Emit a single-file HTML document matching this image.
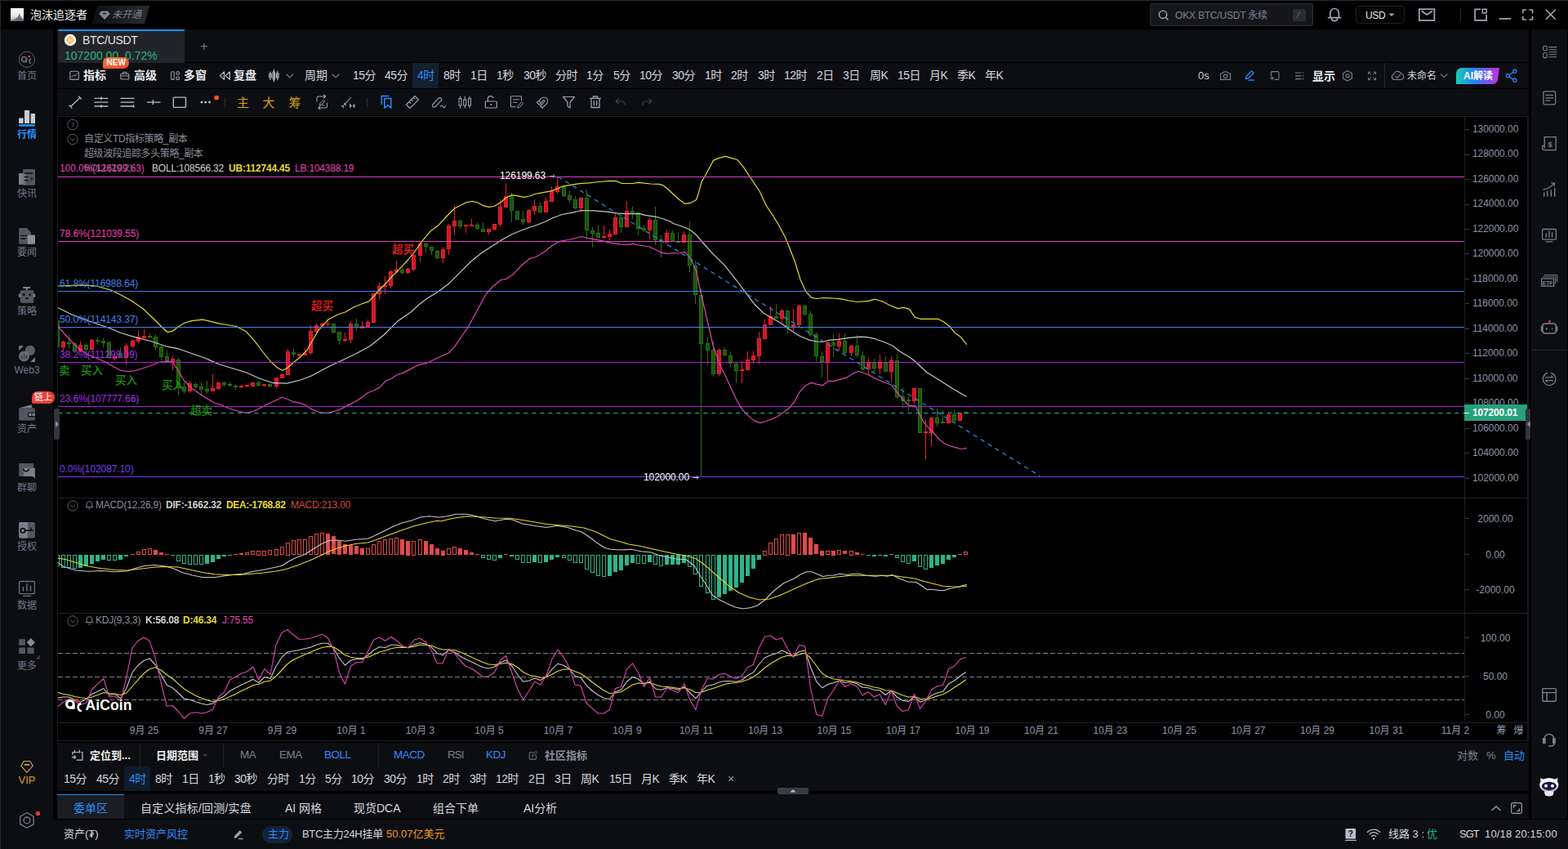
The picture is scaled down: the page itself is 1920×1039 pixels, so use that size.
<!DOCTYPE html>
<html lang="zh"><head><meta charset="utf-8"><title>AiCoin BTC/USDT</title>
<style>
html,body{margin:0;padding:0;background:#000;}
body{width:1920px;height:1039px;overflow:hidden;position:relative;font-family:"Liberation Sans","Noto Sans CJK SC",sans-serif;}
.t{position:absolute;white-space:nowrap;line-height:1;}
.b{position:absolute;}
svg.main{position:absolute;left:0;top:0;}
</style></head><body>
<div class="b" style="left:0px;top:0px;width:1920px;height:1039px;background:#000;"></div>
<div class="b" style="left:0px;top:0px;width:1920px;height:1px;background:#26282d;"></div>
<div class="b" style="left:0px;top:0px;width:1px;height:1039px;background:#26282d;"></div>
<div class="b" style="left:1px;top:36px;width:64.3px;height:1003px;background:#0d0e11;"></div>
<div class="b" style="left:70px;top:36px;width:1802px;height:40px;background:#0d0e11;"></div>
<div class="b" style="left:71px;top:36px;width:155px;height:41px;background:#232429;"></div>
<div class="b" style="left:71px;top:36px;width:155px;height:2px;background:#1890ff;"></div>
<div class="b" style="left:70px;top:77px;width:1802px;height:31px;background:#0d0e11;"></div>
<div class="b" style="left:70px;top:109px;width:1802px;height:32px;background:#0d0e11;"></div>
<div class="b" style="left:1875px;top:36px;width:44px;height:966px;background:#0d0e11;"></div>
<div class="b" style="left:1875px;top:428px;width:44px;height:1px;background:#26282d;"></div>
<div class="b" style="left:70px;top:908.5px;width:1802px;height:59.5px;background:#0d0e11;"></div>
<div class="b" style="left:70px;top:972px;width:1802px;height:30px;background:#0d0e11;"></div>
<div class="b" style="left:70px;top:972px;width:82px;height:30px;background:#1c1d22;"></div>
<div class="b" style="left:70px;top:972px;width:82px;height:1.4px;background:#1890ff;"></div>
<div class="b" style="left:1px;top:1003px;width:1919px;height:36px;background:#0d0e11;"></div>
<div class="b" style="left:505px;top:77px;width:32px;height:31px;background:#13202f;"></div>
<div class="b" style="left:152px;top:938px;width:32px;height:30px;background:#101c2a;"></div>
<div class="b" style="left:952px;top:964px;width:38px;height:8px;background:#3a3d45;border-radius:2px;"></div>
<svg class="main" width="1920" height="1039" viewBox="0 0 1920 1039" shape-rendering="auto">
<line x1="70" y1="142.5" x2="1871" y2="142.5" stroke="#1e2025" stroke-width="1"/>
<line x1="70" y1="609.5" x2="1871" y2="609.5" stroke="#1e2025" stroke-width="1"/>
<line x1="70" y1="750.5" x2="1871" y2="750.5" stroke="#1e2025" stroke-width="1"/>
<line x1="70" y1="884.5" x2="1871" y2="884.5" stroke="#1e2025" stroke-width="1"/>
<line x1="70" y1="906.5" x2="1871" y2="906.5" stroke="#1e2025" stroke-width="1"/>
<line x1="70.5" y1="142" x2="70.5" y2="907" stroke="#1e2025" stroke-width="1"/>
<line x1="1793.5" y1="142" x2="1793.5" y2="884" stroke="#1e2025" stroke-width="1"/>
<rect x="1870.2" y="142" width="1.6" height="765" fill="#1e2025"/>
<line x1="1794" y1="585.5" x2="1799" y2="585.5" stroke="#3a3d45" stroke-width="1"/>
<line x1="1794" y1="554.5" x2="1799" y2="554.5" stroke="#3a3d45" stroke-width="1"/>
<line x1="1794" y1="524.5" x2="1799" y2="524.5" stroke="#3a3d45" stroke-width="1"/>
<line x1="1794" y1="493.5" x2="1799" y2="493.5" stroke="#3a3d45" stroke-width="1"/>
<line x1="1794" y1="463.5" x2="1799" y2="463.5" stroke="#3a3d45" stroke-width="1"/>
<line x1="1794" y1="432.5" x2="1799" y2="432.5" stroke="#3a3d45" stroke-width="1"/>
<line x1="1794" y1="402.5" x2="1799" y2="402.5" stroke="#3a3d45" stroke-width="1"/>
<line x1="1794" y1="371.5" x2="1799" y2="371.5" stroke="#3a3d45" stroke-width="1"/>
<line x1="1794" y1="341.5" x2="1799" y2="341.5" stroke="#3a3d45" stroke-width="1"/>
<line x1="1794" y1="310.5" x2="1799" y2="310.5" stroke="#3a3d45" stroke-width="1"/>
<line x1="1794" y1="280.5" x2="1799" y2="280.5" stroke="#3a3d45" stroke-width="1"/>
<line x1="1794" y1="250.5" x2="1799" y2="250.5" stroke="#3a3d45" stroke-width="1"/>
<line x1="1794" y1="219.5" x2="1799" y2="219.5" stroke="#3a3d45" stroke-width="1"/>
<line x1="1794" y1="189.5" x2="1799" y2="189.5" stroke="#3a3d45" stroke-width="1"/>
<line x1="1794" y1="158.5" x2="1799" y2="158.5" stroke="#3a3d45" stroke-width="1"/>
<line x1="1794" y1="634.5" x2="1799" y2="634.5" stroke="#3a3d45" stroke-width="1"/>
<line x1="1794" y1="678.5" x2="1799" y2="678.5" stroke="#3a3d45" stroke-width="1"/>
<line x1="1794" y1="721.5" x2="1799" y2="721.5" stroke="#3a3d45" stroke-width="1"/>
<line x1="1794" y1="780.5" x2="1799" y2="780.5" stroke="#3a3d45" stroke-width="1"/>
<line x1="1794" y1="827.5" x2="1799" y2="827.5" stroke="#3a3d45" stroke-width="1"/>
<line x1="1794" y1="874.5" x2="1799" y2="874.5" stroke="#3a3d45" stroke-width="1"/>
<clipPath id="cp"><rect x="71" y="143" width="1722" height="465"/></clipPath>
<g clip-path="url(#cp)">
<rect x="70" y="392" width="1" height="33" fill="#27720b"/>
<rect x="68" y="392" width="5" height="33" fill="#27720b"/>
<rect x="69" y="393" width="3" height="31" fill="#1c5309"/>
<rect x="77" y="417" width="1" height="13" fill="#e81f2c"/>
<rect x="75" y="418" width="5" height="7" fill="#e81f2c"/>
<rect x="76" y="419" width="3" height="5" fill="#d21724"/>
<rect x="84" y="410" width="1" height="16" fill="#27720b"/>
<rect x="82" y="419" width="5" height="2" fill="#27720b"/>
<rect x="91" y="419" width="1" height="13" fill="#27720b"/>
<rect x="89" y="420" width="5" height="10" fill="#27720b"/>
<rect x="90" y="421" width="3" height="8" fill="#1c5309"/>
<rect x="98" y="418" width="1" height="13" fill="#e81f2c"/>
<rect x="96" y="422" width="5" height="8" fill="#e81f2c"/>
<rect x="97" y="423" width="3" height="6" fill="#d21724"/>
<rect x="105" y="420" width="1" height="18" fill="#27720b"/>
<rect x="103" y="422" width="5" height="6" fill="#27720b"/>
<rect x="104" y="423" width="3" height="4" fill="#1c5309"/>
<rect x="112" y="415" width="1" height="13" fill="#e81f2c"/>
<rect x="110" y="416" width="5" height="12" fill="#e81f2c"/>
<rect x="111" y="417" width="3" height="10" fill="#d21724"/>
<rect x="119" y="413" width="1" height="9" fill="#27720b"/>
<rect x="117" y="416" width="5" height="2" fill="#27720b"/>
<rect x="126" y="413" width="1" height="12" fill="#27720b"/>
<rect x="124" y="417" width="5" height="3" fill="#27720b"/>
<rect x="125" y="418" width="3" height="1" fill="#1c5309"/>
<rect x="133" y="418" width="1" height="21" fill="#27720b"/>
<rect x="131" y="419" width="5" height="19" fill="#27720b"/>
<rect x="132" y="420" width="3" height="17" fill="#1c5309"/>
<rect x="140" y="433" width="1" height="8" fill="#e81f2c"/>
<rect x="138" y="436" width="5" height="3" fill="#e81f2c"/>
<rect x="139" y="437" width="3" height="1" fill="#d21724"/>
<rect x="147" y="425" width="1" height="13" fill="#27720b"/>
<rect x="145" y="432" width="5" height="6" fill="#27720b"/>
<rect x="146" y="433" width="3" height="4" fill="#1c5309"/>
<rect x="154" y="420" width="1" height="27" fill="#e81f2c"/>
<rect x="152" y="423" width="5" height="15" fill="#e81f2c"/>
<rect x="153" y="424" width="3" height="13" fill="#d21724"/>
<rect x="162" y="415" width="1" height="11" fill="#e81f2c"/>
<rect x="160" y="417" width="5" height="7" fill="#e81f2c"/>
<rect x="161" y="418" width="3" height="5" fill="#d21724"/>
<rect x="169" y="404" width="1" height="16" fill="#e81f2c"/>
<rect x="167" y="412" width="5" height="6" fill="#e81f2c"/>
<rect x="168" y="413" width="3" height="4" fill="#d21724"/>
<rect x="176" y="403" width="1" height="11" fill="#e81f2c"/>
<rect x="174" y="411" width="5" height="3" fill="#e81f2c"/>
<rect x="175" y="412" width="3" height="1" fill="#d21724"/>
<rect x="183" y="408" width="1" height="6" fill="#27720b"/>
<rect x="181" y="411" width="5" height="2" fill="#27720b"/>
<rect x="190" y="409" width="1" height="20" fill="#27720b"/>
<rect x="188" y="412" width="5" height="13" fill="#27720b"/>
<rect x="189" y="413" width="3" height="11" fill="#1c5309"/>
<rect x="197" y="423" width="1" height="18" fill="#27720b"/>
<rect x="195" y="424" width="5" height="13" fill="#27720b"/>
<rect x="196" y="425" width="3" height="11" fill="#1c5309"/>
<rect x="204" y="429" width="1" height="14" fill="#27720b"/>
<rect x="202" y="436" width="5" height="6" fill="#27720b"/>
<rect x="203" y="437" width="3" height="4" fill="#1c5309"/>
<rect x="211" y="436" width="1" height="17" fill="#e81f2c"/>
<rect x="209" y="439" width="5" height="4" fill="#e81f2c"/>
<rect x="210" y="440" width="3" height="2" fill="#d21724"/>
<rect x="218" y="438" width="1" height="46" fill="#27720b"/>
<rect x="216" y="440" width="5" height="35" fill="#27720b"/>
<rect x="217" y="441" width="3" height="33" fill="#1c5309"/>
<rect x="225" y="468" width="1" height="14" fill="#27720b"/>
<rect x="223" y="473" width="5" height="6" fill="#27720b"/>
<rect x="224" y="474" width="3" height="4" fill="#1c5309"/>
<rect x="232" y="466" width="1" height="15" fill="#e81f2c"/>
<rect x="230" y="469" width="5" height="10" fill="#e81f2c"/>
<rect x="231" y="470" width="3" height="8" fill="#d21724"/>
<rect x="239" y="468" width="1" height="8" fill="#27720b"/>
<rect x="237" y="470" width="5" height="4" fill="#27720b"/>
<rect x="238" y="471" width="3" height="2" fill="#1c5309"/>
<rect x="246" y="468" width="1" height="15" fill="#27720b"/>
<rect x="244" y="473" width="5" height="4" fill="#27720b"/>
<rect x="245" y="474" width="3" height="2" fill="#1c5309"/>
<rect x="253" y="466" width="1" height="16" fill="#27720b"/>
<rect x="251" y="476" width="5" height="3" fill="#27720b"/>
<rect x="252" y="477" width="3" height="1" fill="#1c5309"/>
<rect x="260" y="458" width="1" height="21" fill="#e81f2c"/>
<rect x="258" y="475" width="5" height="4" fill="#e81f2c"/>
<rect x="259" y="476" width="3" height="2" fill="#d21724"/>
<rect x="267" y="468" width="1" height="9" fill="#e81f2c"/>
<rect x="265" y="468" width="5" height="8" fill="#e81f2c"/>
<rect x="266" y="469" width="3" height="6" fill="#d21724"/>
<rect x="274" y="467" width="1" height="6" fill="#27720b"/>
<rect x="272" y="468" width="5" height="3" fill="#27720b"/>
<rect x="273" y="469" width="3" height="1" fill="#1c5309"/>
<rect x="281" y="467" width="1" height="6" fill="#27720b"/>
<rect x="279" y="470" width="5" height="2" fill="#27720b"/>
<rect x="288" y="471" width="1" height="6" fill="#27720b"/>
<rect x="286" y="472" width="5" height="2" fill="#27720b"/>
<rect x="295" y="471" width="1" height="4" fill="#e81f2c"/>
<rect x="293" y="472" width="5" height="2" fill="#e81f2c"/>
<rect x="302" y="471" width="1" height="3" fill="#e81f2c"/>
<rect x="300" y="471" width="5" height="2" fill="#e81f2c"/>
<rect x="309" y="468" width="1" height="5" fill="#e81f2c"/>
<rect x="307" y="468" width="5" height="5" fill="#e81f2c"/>
<rect x="308" y="469" width="3" height="3" fill="#d21724"/>
<rect x="316" y="466" width="1" height="7" fill="#27720b"/>
<rect x="314" y="468" width="5" height="4" fill="#27720b"/>
<rect x="315" y="469" width="3" height="2" fill="#1c5309"/>
<rect x="323" y="470" width="1" height="4" fill="#e81f2c"/>
<rect x="321" y="470" width="5" height="2" fill="#e81f2c"/>
<rect x="330" y="469" width="1" height="5" fill="#27720b"/>
<rect x="328" y="470" width="5" height="3" fill="#27720b"/>
<rect x="329" y="471" width="3" height="1" fill="#1c5309"/>
<rect x="338" y="462" width="1" height="13" fill="#e81f2c"/>
<rect x="336" y="462" width="5" height="11" fill="#e81f2c"/>
<rect x="337" y="463" width="3" height="9" fill="#d21724"/>
<rect x="345" y="457" width="1" height="6" fill="#e81f2c"/>
<rect x="343" y="458" width="5" height="5" fill="#e81f2c"/>
<rect x="344" y="459" width="3" height="3" fill="#d21724"/>
<rect x="352" y="427" width="1" height="32" fill="#e81f2c"/>
<rect x="350" y="430" width="5" height="29" fill="#e81f2c"/>
<rect x="351" y="431" width="3" height="27" fill="#d21724"/>
<rect x="359" y="427" width="1" height="11" fill="#27720b"/>
<rect x="357" y="431" width="5" height="3" fill="#27720b"/>
<rect x="358" y="432" width="3" height="1" fill="#1c5309"/>
<rect x="366" y="433" width="1" height="4" fill="#e81f2c"/>
<rect x="364" y="433" width="5" height="2" fill="#e81f2c"/>
<rect x="373" y="426" width="1" height="9" fill="#e81f2c"/>
<rect x="371" y="432" width="5" height="3" fill="#e81f2c"/>
<rect x="372" y="433" width="3" height="1" fill="#d21724"/>
<rect x="380" y="398" width="1" height="36" fill="#e81f2c"/>
<rect x="378" y="405" width="5" height="27" fill="#e81f2c"/>
<rect x="379" y="406" width="3" height="25" fill="#d21724"/>
<rect x="387" y="396" width="1" height="12" fill="#e81f2c"/>
<rect x="385" y="398" width="5" height="8" fill="#e81f2c"/>
<rect x="386" y="399" width="3" height="6" fill="#d21724"/>
<rect x="394" y="395" width="1" height="5" fill="#e81f2c"/>
<rect x="392" y="396" width="5" height="3" fill="#e81f2c"/>
<rect x="393" y="397" width="3" height="1" fill="#d21724"/>
<rect x="401" y="390" width="1" height="10" fill="#e81f2c"/>
<rect x="399" y="396" width="5" height="1" fill="#e81f2c"/>
<rect x="408" y="396" width="1" height="12" fill="#27720b"/>
<rect x="406" y="396" width="5" height="11" fill="#27720b"/>
<rect x="407" y="397" width="3" height="9" fill="#1c5309"/>
<rect x="415" y="406" width="1" height="16" fill="#27720b"/>
<rect x="413" y="406" width="5" height="11" fill="#27720b"/>
<rect x="414" y="407" width="3" height="9" fill="#1c5309"/>
<rect x="422" y="407" width="1" height="12" fill="#e81f2c"/>
<rect x="420" y="415" width="5" height="2" fill="#e81f2c"/>
<rect x="429" y="393" width="1" height="27" fill="#e81f2c"/>
<rect x="427" y="396" width="5" height="20" fill="#e81f2c"/>
<rect x="428" y="397" width="3" height="18" fill="#d21724"/>
<rect x="436" y="390" width="1" height="15" fill="#27720b"/>
<rect x="434" y="396" width="5" height="5" fill="#27720b"/>
<rect x="435" y="397" width="3" height="3" fill="#1c5309"/>
<rect x="443" y="393" width="1" height="9" fill="#e81f2c"/>
<rect x="441" y="399" width="5" height="3" fill="#e81f2c"/>
<rect x="442" y="400" width="3" height="1" fill="#d21724"/>
<rect x="450" y="391" width="1" height="9" fill="#e81f2c"/>
<rect x="448" y="394" width="5" height="6" fill="#e81f2c"/>
<rect x="449" y="395" width="3" height="4" fill="#d21724"/>
<rect x="457" y="359" width="1" height="36" fill="#e81f2c"/>
<rect x="455" y="359" width="5" height="36" fill="#e81f2c"/>
<rect x="456" y="360" width="3" height="34" fill="#d21724"/>
<rect x="464" y="346" width="1" height="20" fill="#e81f2c"/>
<rect x="462" y="350" width="5" height="10" fill="#e81f2c"/>
<rect x="463" y="351" width="3" height="8" fill="#d21724"/>
<rect x="471" y="338" width="1" height="22" fill="#e81f2c"/>
<rect x="469" y="349" width="5" height="2" fill="#e81f2c"/>
<rect x="478" y="331" width="1" height="22" fill="#e81f2c"/>
<rect x="476" y="332" width="5" height="18" fill="#e81f2c"/>
<rect x="477" y="333" width="3" height="16" fill="#d21724"/>
<rect x="485" y="319" width="1" height="16" fill="#e81f2c"/>
<rect x="483" y="330" width="5" height="3" fill="#e81f2c"/>
<rect x="484" y="331" width="3" height="1" fill="#d21724"/>
<rect x="492" y="327" width="1" height="9" fill="#27720b"/>
<rect x="490" y="330" width="5" height="4" fill="#27720b"/>
<rect x="491" y="331" width="3" height="2" fill="#1c5309"/>
<rect x="499" y="327" width="1" height="8" fill="#e81f2c"/>
<rect x="497" y="329" width="5" height="5" fill="#e81f2c"/>
<rect x="498" y="330" width="3" height="3" fill="#d21724"/>
<rect x="506" y="311" width="1" height="21" fill="#e81f2c"/>
<rect x="504" y="312" width="5" height="18" fill="#e81f2c"/>
<rect x="505" y="313" width="3" height="16" fill="#d21724"/>
<rect x="514" y="298" width="1" height="22" fill="#e81f2c"/>
<rect x="512" y="298" width="5" height="15" fill="#e81f2c"/>
<rect x="513" y="299" width="3" height="13" fill="#d21724"/>
<rect x="521" y="297" width="1" height="12" fill="#27720b"/>
<rect x="519" y="298" width="5" height="4" fill="#27720b"/>
<rect x="520" y="299" width="3" height="2" fill="#1c5309"/>
<rect x="528" y="302" width="1" height="10" fill="#27720b"/>
<rect x="526" y="302" width="5" height="5" fill="#27720b"/>
<rect x="527" y="303" width="3" height="3" fill="#1c5309"/>
<rect x="535" y="306" width="1" height="11" fill="#27720b"/>
<rect x="533" y="307" width="5" height="9" fill="#27720b"/>
<rect x="534" y="308" width="3" height="7" fill="#1c5309"/>
<rect x="542" y="302" width="1" height="20" fill="#e81f2c"/>
<rect x="540" y="305" width="5" height="11" fill="#e81f2c"/>
<rect x="541" y="306" width="3" height="9" fill="#d21724"/>
<rect x="549" y="274" width="1" height="38" fill="#e81f2c"/>
<rect x="547" y="276" width="5" height="29" fill="#e81f2c"/>
<rect x="548" y="277" width="3" height="27" fill="#d21724"/>
<rect x="556" y="251" width="1" height="37" fill="#e81f2c"/>
<rect x="554" y="270" width="5" height="7" fill="#e81f2c"/>
<rect x="555" y="271" width="3" height="5" fill="#d21724"/>
<rect x="563" y="269" width="1" height="11" fill="#27720b"/>
<rect x="561" y="270" width="5" height="7" fill="#27720b"/>
<rect x="562" y="271" width="3" height="5" fill="#1c5309"/>
<rect x="570" y="275" width="1" height="10" fill="#e81f2c"/>
<rect x="568" y="275" width="5" height="2" fill="#e81f2c"/>
<rect x="577" y="268" width="1" height="9" fill="#e81f2c"/>
<rect x="575" y="275" width="5" height="2" fill="#e81f2c"/>
<rect x="584" y="272" width="1" height="9" fill="#27720b"/>
<rect x="582" y="275" width="5" height="5" fill="#27720b"/>
<rect x="583" y="276" width="3" height="3" fill="#1c5309"/>
<rect x="591" y="272" width="1" height="12" fill="#27720b"/>
<rect x="589" y="280" width="5" height="4" fill="#27720b"/>
<rect x="590" y="281" width="3" height="2" fill="#1c5309"/>
<rect x="598" y="280" width="1" height="7" fill="#e81f2c"/>
<rect x="596" y="280" width="5" height="4" fill="#e81f2c"/>
<rect x="597" y="281" width="3" height="2" fill="#d21724"/>
<rect x="605" y="274" width="1" height="8" fill="#e81f2c"/>
<rect x="603" y="274" width="5" height="7" fill="#e81f2c"/>
<rect x="604" y="275" width="3" height="5" fill="#d21724"/>
<rect x="612" y="244" width="1" height="34" fill="#e81f2c"/>
<rect x="610" y="253" width="5" height="22" fill="#e81f2c"/>
<rect x="611" y="254" width="3" height="20" fill="#d21724"/>
<rect x="619" y="224" width="1" height="30" fill="#e81f2c"/>
<rect x="617" y="240" width="5" height="14" fill="#e81f2c"/>
<rect x="618" y="241" width="3" height="12" fill="#d21724"/>
<rect x="626" y="236" width="1" height="36" fill="#27720b"/>
<rect x="624" y="240" width="5" height="18" fill="#27720b"/>
<rect x="625" y="241" width="3" height="16" fill="#1c5309"/>
<rect x="633" y="258" width="1" height="11" fill="#27720b"/>
<rect x="631" y="258" width="5" height="11" fill="#27720b"/>
<rect x="632" y="259" width="3" height="9" fill="#1c5309"/>
<rect x="640" y="258" width="1" height="17" fill="#27720b"/>
<rect x="638" y="268" width="5" height="4" fill="#27720b"/>
<rect x="639" y="269" width="3" height="2" fill="#1c5309"/>
<rect x="647" y="256" width="1" height="17" fill="#e81f2c"/>
<rect x="645" y="257" width="5" height="15" fill="#e81f2c"/>
<rect x="646" y="258" width="3" height="13" fill="#d21724"/>
<rect x="654" y="244" width="1" height="19" fill="#e81f2c"/>
<rect x="652" y="252" width="5" height="6" fill="#e81f2c"/>
<rect x="653" y="253" width="3" height="4" fill="#d21724"/>
<rect x="661" y="248" width="1" height="12" fill="#27720b"/>
<rect x="659" y="252" width="5" height="8" fill="#27720b"/>
<rect x="660" y="253" width="3" height="6" fill="#1c5309"/>
<rect x="668" y="241" width="1" height="19" fill="#e81f2c"/>
<rect x="666" y="246" width="5" height="14" fill="#e81f2c"/>
<rect x="667" y="247" width="3" height="12" fill="#d21724"/>
<rect x="675" y="228" width="1" height="19" fill="#e81f2c"/>
<rect x="673" y="233" width="5" height="14" fill="#e81f2c"/>
<rect x="674" y="234" width="3" height="12" fill="#d21724"/>
<rect x="682" y="217" width="1" height="20" fill="#e81f2c"/>
<rect x="680" y="228" width="5" height="7" fill="#e81f2c"/>
<rect x="681" y="229" width="3" height="5" fill="#d21724"/>
<rect x="690" y="226" width="1" height="15" fill="#27720b"/>
<rect x="688" y="229" width="5" height="11" fill="#27720b"/>
<rect x="689" y="230" width="3" height="9" fill="#1c5309"/>
<rect x="697" y="233" width="1" height="15" fill="#27720b"/>
<rect x="695" y="239" width="5" height="6" fill="#27720b"/>
<rect x="696" y="240" width="3" height="4" fill="#1c5309"/>
<rect x="704" y="240" width="1" height="16" fill="#27720b"/>
<rect x="702" y="244" width="5" height="11" fill="#27720b"/>
<rect x="703" y="245" width="3" height="9" fill="#1c5309"/>
<rect x="711" y="241" width="1" height="19" fill="#e81f2c"/>
<rect x="709" y="242" width="5" height="13" fill="#e81f2c"/>
<rect x="710" y="243" width="3" height="11" fill="#d21724"/>
<rect x="718" y="232" width="1" height="59" fill="#27720b"/>
<rect x="716" y="242" width="5" height="40" fill="#27720b"/>
<rect x="717" y="243" width="3" height="38" fill="#1c5309"/>
<rect x="725" y="278" width="1" height="24" fill="#27720b"/>
<rect x="723" y="282" width="5" height="4" fill="#27720b"/>
<rect x="724" y="283" width="3" height="2" fill="#1c5309"/>
<rect x="732" y="275" width="1" height="16" fill="#27720b"/>
<rect x="730" y="285" width="5" height="6" fill="#27720b"/>
<rect x="731" y="286" width="3" height="4" fill="#1c5309"/>
<rect x="739" y="276" width="1" height="16" fill="#e81f2c"/>
<rect x="737" y="289" width="5" height="2" fill="#e81f2c"/>
<rect x="746" y="281" width="1" height="13" fill="#e81f2c"/>
<rect x="744" y="286" width="5" height="4" fill="#e81f2c"/>
<rect x="745" y="287" width="3" height="2" fill="#d21724"/>
<rect x="753" y="262" width="1" height="25" fill="#e81f2c"/>
<rect x="751" y="266" width="5" height="21" fill="#e81f2c"/>
<rect x="752" y="267" width="3" height="19" fill="#d21724"/>
<rect x="760" y="260" width="1" height="25" fill="#27720b"/>
<rect x="758" y="266" width="5" height="12" fill="#27720b"/>
<rect x="759" y="267" width="3" height="10" fill="#1c5309"/>
<rect x="767" y="246" width="1" height="32" fill="#e81f2c"/>
<rect x="765" y="258" width="5" height="20" fill="#e81f2c"/>
<rect x="766" y="259" width="3" height="18" fill="#d21724"/>
<rect x="774" y="253" width="1" height="15" fill="#27720b"/>
<rect x="772" y="258" width="5" height="3" fill="#27720b"/>
<rect x="773" y="259" width="3" height="1" fill="#1c5309"/>
<rect x="781" y="260" width="1" height="28" fill="#27720b"/>
<rect x="779" y="260" width="5" height="20" fill="#27720b"/>
<rect x="780" y="261" width="3" height="18" fill="#1c5309"/>
<rect x="788" y="276" width="1" height="8" fill="#27720b"/>
<rect x="786" y="279" width="5" height="3" fill="#27720b"/>
<rect x="787" y="280" width="3" height="1" fill="#1c5309"/>
<rect x="795" y="267" width="1" height="26" fill="#e81f2c"/>
<rect x="793" y="269" width="5" height="13" fill="#e81f2c"/>
<rect x="794" y="270" width="3" height="11" fill="#d21724"/>
<rect x="802" y="253" width="1" height="47" fill="#27720b"/>
<rect x="800" y="269" width="5" height="25" fill="#27720b"/>
<rect x="801" y="270" width="3" height="23" fill="#1c5309"/>
<rect x="809" y="288" width="1" height="27" fill="#27720b"/>
<rect x="807" y="293" width="5" height="3" fill="#27720b"/>
<rect x="808" y="294" width="3" height="1" fill="#1c5309"/>
<rect x="816" y="281" width="1" height="16" fill="#e81f2c"/>
<rect x="814" y="285" width="5" height="12" fill="#e81f2c"/>
<rect x="815" y="286" width="3" height="10" fill="#d21724"/>
<rect x="823" y="282" width="1" height="14" fill="#27720b"/>
<rect x="821" y="285" width="5" height="11" fill="#27720b"/>
<rect x="822" y="286" width="3" height="9" fill="#1c5309"/>
<rect x="830" y="284" width="1" height="13" fill="#27720b"/>
<rect x="828" y="296" width="5" height="1" fill="#27720b"/>
<rect x="837" y="283" width="1" height="14" fill="#e81f2c"/>
<rect x="835" y="287" width="5" height="10" fill="#e81f2c"/>
<rect x="836" y="288" width="3" height="8" fill="#d21724"/>
<rect x="844" y="271" width="1" height="62" fill="#27720b"/>
<rect x="842" y="287" width="5" height="38" fill="#27720b"/>
<rect x="843" y="288" width="3" height="36" fill="#1c5309"/>
<rect x="851" y="319" width="1" height="53" fill="#27720b"/>
<rect x="849" y="325" width="5" height="36" fill="#27720b"/>
<rect x="850" y="326" width="3" height="34" fill="#1c5309"/>
<rect x="858" y="353" width="1" height="229" fill="#27720b"/>
<rect x="856" y="361" width="5" height="60" fill="#27720b"/>
<rect x="857" y="362" width="3" height="58" fill="#1c5309"/>
<rect x="866" y="412" width="1" height="35" fill="#27720b"/>
<rect x="864" y="420" width="5" height="9" fill="#27720b"/>
<rect x="865" y="421" width="3" height="7" fill="#1c5309"/>
<rect x="873" y="418" width="1" height="43" fill="#27720b"/>
<rect x="871" y="428" width="5" height="30" fill="#27720b"/>
<rect x="872" y="429" width="3" height="28" fill="#1c5309"/>
<rect x="880" y="427" width="1" height="33" fill="#e81f2c"/>
<rect x="878" y="428" width="5" height="30" fill="#e81f2c"/>
<rect x="879" y="429" width="3" height="28" fill="#d21724"/>
<rect x="887" y="425" width="1" height="11" fill="#27720b"/>
<rect x="885" y="428" width="5" height="7" fill="#27720b"/>
<rect x="886" y="429" width="3" height="5" fill="#1c5309"/>
<rect x="894" y="430" width="1" height="19" fill="#27720b"/>
<rect x="892" y="435" width="5" height="10" fill="#27720b"/>
<rect x="893" y="436" width="3" height="8" fill="#1c5309"/>
<rect x="901" y="442" width="1" height="27" fill="#27720b"/>
<rect x="899" y="445" width="5" height="9" fill="#27720b"/>
<rect x="900" y="446" width="3" height="7" fill="#1c5309"/>
<rect x="908" y="442" width="1" height="27" fill="#e81f2c"/>
<rect x="906" y="452" width="5" height="2" fill="#e81f2c"/>
<rect x="915" y="430" width="1" height="23" fill="#e81f2c"/>
<rect x="913" y="440" width="5" height="13" fill="#e81f2c"/>
<rect x="914" y="441" width="3" height="11" fill="#d21724"/>
<rect x="922" y="430" width="1" height="15" fill="#e81f2c"/>
<rect x="920" y="435" width="5" height="6" fill="#e81f2c"/>
<rect x="921" y="436" width="3" height="4" fill="#d21724"/>
<rect x="929" y="406" width="1" height="39" fill="#e81f2c"/>
<rect x="927" y="414" width="5" height="22" fill="#e81f2c"/>
<rect x="928" y="415" width="3" height="20" fill="#d21724"/>
<rect x="936" y="391" width="1" height="24" fill="#e81f2c"/>
<rect x="934" y="397" width="5" height="18" fill="#e81f2c"/>
<rect x="935" y="398" width="3" height="16" fill="#d21724"/>
<rect x="943" y="375" width="1" height="23" fill="#e81f2c"/>
<rect x="941" y="387" width="5" height="11" fill="#e81f2c"/>
<rect x="942" y="388" width="3" height="9" fill="#d21724"/>
<rect x="950" y="372" width="1" height="18" fill="#27720b"/>
<rect x="948" y="387" width="5" height="3" fill="#27720b"/>
<rect x="949" y="388" width="3" height="1" fill="#1c5309"/>
<rect x="957" y="378" width="1" height="17" fill="#e81f2c"/>
<rect x="955" y="380" width="5" height="10" fill="#e81f2c"/>
<rect x="956" y="381" width="3" height="8" fill="#d21724"/>
<rect x="964" y="380" width="1" height="28" fill="#27720b"/>
<rect x="962" y="380" width="5" height="20" fill="#27720b"/>
<rect x="963" y="381" width="3" height="18" fill="#1c5309"/>
<rect x="971" y="378" width="1" height="27" fill="#e81f2c"/>
<rect x="969" y="397" width="5" height="3" fill="#e81f2c"/>
<rect x="970" y="398" width="3" height="1" fill="#d21724"/>
<rect x="978" y="373" width="1" height="25" fill="#e81f2c"/>
<rect x="976" y="374" width="5" height="24" fill="#e81f2c"/>
<rect x="977" y="375" width="3" height="22" fill="#d21724"/>
<rect x="985" y="373" width="1" height="14" fill="#27720b"/>
<rect x="983" y="374" width="5" height="11" fill="#27720b"/>
<rect x="984" y="375" width="3" height="9" fill="#1c5309"/>
<rect x="992" y="380" width="1" height="32" fill="#27720b"/>
<rect x="990" y="384" width="5" height="26" fill="#27720b"/>
<rect x="991" y="385" width="3" height="24" fill="#1c5309"/>
<rect x="999" y="407" width="1" height="35" fill="#27720b"/>
<rect x="997" y="409" width="5" height="27" fill="#27720b"/>
<rect x="998" y="410" width="3" height="25" fill="#1c5309"/>
<rect x="1006" y="430" width="1" height="32" fill="#27720b"/>
<rect x="1004" y="436" width="5" height="7" fill="#27720b"/>
<rect x="1005" y="437" width="3" height="5" fill="#1c5309"/>
<rect x="1013" y="418" width="1" height="47" fill="#e81f2c"/>
<rect x="1011" y="419" width="5" height="24" fill="#e81f2c"/>
<rect x="1012" y="420" width="3" height="22" fill="#d21724"/>
<rect x="1020" y="409" width="1" height="28" fill="#27720b"/>
<rect x="1018" y="419" width="5" height="4" fill="#27720b"/>
<rect x="1019" y="420" width="3" height="2" fill="#1c5309"/>
<rect x="1027" y="408" width="1" height="21" fill="#e81f2c"/>
<rect x="1025" y="417" width="5" height="7" fill="#e81f2c"/>
<rect x="1026" y="418" width="3" height="5" fill="#d21724"/>
<rect x="1034" y="408" width="1" height="25" fill="#27720b"/>
<rect x="1032" y="417" width="5" height="15" fill="#27720b"/>
<rect x="1033" y="418" width="3" height="13" fill="#1c5309"/>
<rect x="1042" y="422" width="1" height="14" fill="#e81f2c"/>
<rect x="1040" y="423" width="5" height="9" fill="#e81f2c"/>
<rect x="1041" y="424" width="3" height="7" fill="#d21724"/>
<rect x="1049" y="410" width="1" height="27" fill="#27720b"/>
<rect x="1047" y="423" width="5" height="12" fill="#27720b"/>
<rect x="1048" y="424" width="3" height="10" fill="#1c5309"/>
<rect x="1056" y="430" width="1" height="25" fill="#27720b"/>
<rect x="1054" y="435" width="5" height="17" fill="#27720b"/>
<rect x="1055" y="436" width="3" height="15" fill="#1c5309"/>
<rect x="1063" y="439" width="1" height="21" fill="#e81f2c"/>
<rect x="1061" y="444" width="5" height="8" fill="#e81f2c"/>
<rect x="1062" y="445" width="3" height="6" fill="#d21724"/>
<rect x="1070" y="439" width="1" height="16" fill="#27720b"/>
<rect x="1068" y="444" width="5" height="7" fill="#27720b"/>
<rect x="1069" y="445" width="3" height="5" fill="#1c5309"/>
<rect x="1077" y="434" width="1" height="24" fill="#e81f2c"/>
<rect x="1075" y="444" width="5" height="7" fill="#e81f2c"/>
<rect x="1076" y="445" width="3" height="5" fill="#d21724"/>
<rect x="1084" y="436" width="1" height="19" fill="#27720b"/>
<rect x="1082" y="444" width="5" height="11" fill="#27720b"/>
<rect x="1083" y="445" width="3" height="9" fill="#1c5309"/>
<rect x="1091" y="436" width="1" height="32" fill="#e81f2c"/>
<rect x="1089" y="441" width="5" height="14" fill="#e81f2c"/>
<rect x="1090" y="442" width="3" height="12" fill="#d21724"/>
<rect x="1098" y="433" width="1" height="55" fill="#27720b"/>
<rect x="1096" y="441" width="5" height="45" fill="#27720b"/>
<rect x="1097" y="442" width="3" height="43" fill="#1c5309"/>
<rect x="1105" y="474" width="1" height="26" fill="#27720b"/>
<rect x="1103" y="485" width="5" height="6" fill="#27720b"/>
<rect x="1104" y="486" width="3" height="4" fill="#1c5309"/>
<rect x="1112" y="486" width="1" height="16" fill="#27720b"/>
<rect x="1110" y="489" width="5" height="2" fill="#27720b"/>
<rect x="1119" y="474" width="1" height="20" fill="#e81f2c"/>
<rect x="1117" y="475" width="5" height="16" fill="#e81f2c"/>
<rect x="1118" y="476" width="3" height="14" fill="#d21724"/>
<rect x="1126" y="475" width="1" height="55" fill="#27720b"/>
<rect x="1124" y="475" width="5" height="55" fill="#27720b"/>
<rect x="1125" y="476" width="3" height="53" fill="#1c5309"/>
<rect x="1133" y="514" width="1" height="48" fill="#e81f2c"/>
<rect x="1131" y="528" width="5" height="2" fill="#e81f2c"/>
<rect x="1140" y="511" width="1" height="35" fill="#e81f2c"/>
<rect x="1138" y="511" width="5" height="19" fill="#e81f2c"/>
<rect x="1139" y="512" width="3" height="17" fill="#d21724"/>
<rect x="1147" y="500" width="1" height="22" fill="#27720b"/>
<rect x="1145" y="511" width="5" height="7" fill="#27720b"/>
<rect x="1146" y="512" width="3" height="5" fill="#1c5309"/>
<rect x="1154" y="502" width="1" height="16" fill="#27720b"/>
<rect x="1152" y="516" width="5" height="2" fill="#27720b"/>
<rect x="1161" y="504" width="1" height="15" fill="#e81f2c"/>
<rect x="1159" y="507" width="5" height="11" fill="#e81f2c"/>
<rect x="1160" y="508" width="3" height="9" fill="#d21724"/>
<rect x="1168" y="501" width="1" height="16" fill="#27720b"/>
<rect x="1166" y="507" width="5" height="8" fill="#27720b"/>
<rect x="1167" y="508" width="3" height="6" fill="#1c5309"/>
<rect x="1175" y="505" width="1" height="10" fill="#e81f2c"/>
<rect x="1173" y="505" width="5" height="10" fill="#e81f2c"/>
<rect x="1174" y="506" width="3" height="8" fill="#d21724"/>
<rect x="1182" y="504" width="1" height="3" fill="#27720b"/>
<rect x="1180" y="504" width="5" height="2" fill="#27720b"/>
<polyline points="70.0,376.0 71.3,376.7 88.0,385.0 109.7,393.3 134.7,401.7 148.0,407.5 168.0,413.3 184.7,417.5 204.7,424.2 218.0,426.7 234.7,432.5 251.3,438.3 268.0,445.8 284.7,450.8 301.3,455.8 318.0,463.3 334.7,468.7 351.3,469.2 368.0,465.0 381.3,460.0 388.0,456.3 403.3,448.3 436.7,432.5 453.3,423.3 470.0,410.0 486.7,393.3 503.3,381.7 513.3,372.5 523.3,365.0 536.7,356.7 550.0,346.7 563.3,333.3 576.7,320.0 590.0,309.2 603.3,300.8 613.3,294.2 626.7,286.7 640.0,281.3 653.3,276.7 666.7,271.7 676.7,266.7 688.3,262.5 700.0,260.3 711.7,257.5 726.7,257.8 743.3,259.2 755.0,260.8 766.7,261.7 783.3,261.7 790.0,263.3 803.3,265.3 813.3,268.3 820.0,270.8 825.0,273.7 835.0,277.0 845.0,281.2 853.3,288.3 863.3,300.0 873.3,310.8 886.7,324.2 896.7,336.7 903.3,345.0 913.3,358.3 923.3,371.7 935.0,383.3 946.7,390.0 956.7,395.8 966.7,403.3 978.3,410.8 990.0,415.8 1000.0,418.0 1008.3,418.3 1015.0,416.3 1026.7,415.3 1040.0,413.3 1053.3,412.2 1061.7,412.7 1071.7,414.7 1081.7,418.3 1093.3,423.3 1101.7,430.0 1113.3,436.7 1120.0,441.7 1135.0,455.8 1150.0,465.0 1166.7,475.8 1183.7,485.5" fill="none" stroke="#c8c8c8" stroke-width="1.2" stroke-linejoin="round"/>
<polyline points="70.0,350.2 71.8,350.0 83.0,349.5 100.5,348.8 118.0,350.0 135.5,355.0 146.3,360.0 161.3,368.3 174.7,377.5 188.0,390.0 198.0,400.0 204.7,406.3 211.3,405.3 218.0,400.0 226.3,395.0 234.7,392.7 248.0,391.2 258.0,393.3 268.0,395.8 278.0,397.5 289.7,399.5 301.3,405.8 311.3,416.7 321.3,430.0 331.3,442.5 339.7,450.0 345.5,453.3 351.3,450.8 359.7,443.3 368.0,436.7 376.3,428.0 381.3,419.0 390.0,404.2 401.7,391.3 413.3,385.0 423.3,381.7 433.3,375.8 443.3,371.7 451.7,368.9 458.3,362.0 463.3,355.8 471.7,347.5 480.0,338.3 490.0,328.3 500.0,317.5 510.0,305.0 518.3,293.3 526.7,283.3 536.7,275.8 546.7,265.0 556.7,255.0 565.0,250.8 571.7,247.5 578.3,246.3 585.0,248.0 591.7,251.7 598.3,253.3 605.0,252.5 613.3,247.5 620.0,241.7 626.7,238.7 633.3,239.7 641.7,241.3 648.3,240.0 655.0,237.5 663.3,235.8 673.3,234.2 683.3,230.8 688.3,228.3 698.3,226.3 710.0,224.7 721.7,223.8 733.3,222.5 746.7,221.3 755.0,221.7 761.7,224.5 775.0,224.5 781.7,223.3 796.7,225.0 806.7,225.3 811.7,226.7 818.3,231.7 825.0,238.3 831.7,244.2 838.3,249.3 845.9,248.3 852.6,244.5 855.1,237.0 859.3,221.9 863.0,216.0 873.5,196.4 880.2,193.4 888.6,191.4 895.3,193.4 902.8,195.5 909.5,203.1 917.9,216.0 930.4,234.5 938.3,251.7 946.7,264.2 953.3,275.0 961.7,290.8 966.7,303.3 973.3,320.0 980.0,342.0 986.7,356.7 993.3,364.2 1000.0,365.5 1008.3,364.5 1020.0,365.0 1030.0,365.8 1040.0,368.0 1050.0,369.5 1063.3,368.3 1071.7,366.2 1080.0,368.7 1090.0,373.8 1099.2,377.6 1106.3,376.3 1113.5,378.4 1120.2,388.1 1126.9,390.3 1148.6,390.3 1156.2,394.3 1162.9,399.4 1168.7,406.9 1176.3,412.3 1183.6,421.6" fill="none" stroke="#e4da2a" stroke-width="1.2" stroke-linejoin="round"/>
<polyline points="70.0,396.0 71.3,400.0 84.7,415.0 94.7,425.0 106.3,433.3 118.0,438.3 128.0,442.5 138.0,448.3 148.0,453.3 156.3,454.5 164.7,453.8 174.7,450.8 184.7,447.5 196.3,442.8 204.7,442.5 211.3,442.8 218.0,453.3 224.7,465.0 234.7,475.0 248.0,484.2 261.3,492.5 271.3,495.8 281.3,500.0 291.3,503.3 301.3,505.3 308.0,504.2 318.0,499.7 328.0,494.2 338.0,489.7 345.5,486.2 351.3,488.3 359.7,491.7 368.0,493.3 375.0,496.2 380.9,500.4 386.8,503.0 391.8,504.7 396.0,505.4 401.0,505.4 406.9,504.1 416.1,501.2 423.6,497.4 430.3,494.1 437.0,490.3 443.7,485.7 451.2,480.3 457.9,477.7 464.6,474.4 472.2,466.4 478.9,463.5 486.4,458.5 493.1,456.6 500.7,452.6 507.4,449.1 514.1,445.9 520.8,444.9 526.7,442.5 536.7,437.5 550.0,431.7 556.7,424.2 573.3,400.0 583.3,381.7 588.3,372.5 595.0,360.0 603.3,350.8 613.3,342.5 620.0,341.3 628.3,335.8 638.3,325.0 648.3,316.7 655.0,315.0 666.7,308.3 676.7,300.0 686.7,295.0 698.3,293.0 711.7,289.5 720.0,291.7 735.0,294.2 746.7,297.2 760.0,299.2 768.3,299.3 775.0,298.3 785.0,300.5 795.0,302.0 803.3,305.8 810.0,309.2 816.7,310.3 823.3,309.5 831.7,310.0 838.3,308.3 843.3,313.3 848.3,321.7 852.5,331.7 856.7,351.7 861.7,373.3 866.7,395.0 873.3,423.3 881.7,446.7 888.4,460.0 895.1,475.1 901.8,489.3 906.8,497.7 910.2,502.7 916.0,508.6 923.6,514.9 930.7,517.6 937.0,515.7 944.5,513.2 952.0,509.8 959.6,504.4 966.3,499.4 972.1,492.7 978.8,480.1 986.4,471.7 993.5,468.4 999.8,470.1 1007.3,471.6 1014.4,466.3 1021.5,466.3 1029.1,464.2 1036.6,462.1 1043.3,458.0 1050.8,454.2 1056.7,456.3 1063.3,458.5 1071.7,463.3 1081.7,467.5 1091.7,471.3 1098.3,480.0 1106.7,490.0 1113.3,496.7 1120.8,496.7 1125.0,505.0 1130.0,515.0 1135.0,521.7 1143.3,530.0 1150.0,537.5 1156.7,543.0 1166.7,546.7 1176.7,549.5 1183.7,548.3" fill="none" stroke="#e045b4" stroke-width="1.2" stroke-linejoin="round"/>
<line x1="71" y1="216.5" x2="1793" y2="216.5" stroke="#e040c4" stroke-width="1.15"/>
<line x1="71" y1="295.5" x2="1793" y2="295.5" stroke="#e040c4" stroke-width="1.15"/>
<line x1="71" y1="356.5" x2="1793" y2="356.5" stroke="#3f83ee" stroke-width="1.15"/>
<line x1="71" y1="400.5" x2="1793" y2="400.5" stroke="#3f83ee" stroke-width="1.15"/>
<line x1="71" y1="443.5" x2="1793" y2="443.5" stroke="#ab22e2" stroke-width="1.15"/>
<line x1="71" y1="497.5" x2="1793" y2="497.5" stroke="#ab22e2" stroke-width="1.15"/>
<line x1="71" y1="583.5" x2="1793" y2="583.5" stroke="#7a3cf0" stroke-width="1.15"/>
<line x1="71.3" y1="505.5" x2="1793" y2="505.5" stroke="#22b895" stroke-width="1.2" stroke-dasharray="5 5"/>
<line x1="683.3" y1="216.3" x2="1273.3" y2="582.5" stroke="#1f8fe8" stroke-width="1.25" stroke-dasharray="5.5 5"/>
</g>
<clipPath id="cp2"><rect x="71" y="610" width="1722" height="274"/></clipPath>
<g clip-path="url(#cp2)">
<rect x="68.5" y="679.5" width="4" height="13" fill="none" stroke="#2cb48a" stroke-width="1"/>
<rect x="75.5" y="679.5" width="4" height="15" fill="none" stroke="#2cb48a" stroke-width="1"/>
<rect x="82.5" y="679.5" width="4" height="15" fill="none" stroke="#2cb48a" stroke-width="1"/>
<rect x="89.5" y="679.5" width="4" height="16" fill="none" stroke="#2cb48a" stroke-width="1"/>
<rect x="96" y="679" width="5" height="16" fill="#2cb48a"/>
<rect x="103" y="679" width="5" height="14" fill="#2cb48a"/>
<rect x="110" y="679" width="5" height="11" fill="#2cb48a"/>
<rect x="117" y="679" width="5" height="8" fill="#2cb48a"/>
<rect x="124" y="679" width="5" height="6" fill="#2cb48a"/>
<rect x="131.5" y="679.5" width="4" height="6" fill="none" stroke="#2cb48a" stroke-width="1"/>
<rect x="138.5" y="679.5" width="4" height="6" fill="none" stroke="#2cb48a" stroke-width="1"/>
<rect x="145" y="679" width="5" height="6" fill="#2cb48a"/>
<rect x="152" y="679" width="5" height="2" fill="#2cb48a"/>
<rect x="160" y="678" width="5" height="1" fill="#e04a4a"/>
<rect x="167.5" y="675.5" width="4" height="3" fill="none" stroke="#e04a4a" stroke-width="1"/>
<rect x="174.5" y="672.5" width="4" height="6" fill="none" stroke="#e04a4a" stroke-width="1"/>
<rect x="181.5" y="671.5" width="4" height="7" fill="none" stroke="#e04a4a" stroke-width="1"/>
<rect x="188" y="673" width="5" height="6" fill="#e04a4a"/>
<rect x="195" y="676" width="5" height="3" fill="#e04a4a"/>
<rect x="202" y="678" width="5" height="1" fill="#e04a4a"/>
<rect x="209" y="679" width="5" height="1" fill="#2cb48a"/>
<rect x="216.5" y="679.5" width="4" height="7" fill="none" stroke="#2cb48a" stroke-width="1"/>
<rect x="223.5" y="679.5" width="4" height="10" fill="none" stroke="#2cb48a" stroke-width="1"/>
<rect x="230.5" y="679.5" width="4" height="11" fill="none" stroke="#2cb48a" stroke-width="1"/>
<rect x="237.5" y="679.5" width="4" height="11" fill="none" stroke="#2cb48a" stroke-width="1"/>
<rect x="244.5" y="679.5" width="4" height="11" fill="none" stroke="#2cb48a" stroke-width="1"/>
<rect x="251" y="679" width="5" height="11" fill="#2cb48a"/>
<rect x="258" y="679" width="5" height="9" fill="#2cb48a"/>
<rect x="265" y="679" width="5" height="5" fill="#2cb48a"/>
<rect x="272" y="679" width="5" height="2" fill="#2cb48a"/>
<rect x="279" y="679" width="5" height="1" fill="#2cb48a"/>
<rect x="286" y="678" width="5" height="1" fill="#e04a4a"/>
<rect x="293" y="677" width="5" height="2" fill="#e04a4a"/>
<rect x="300.5" y="676.5" width="4" height="2" fill="none" stroke="#e04a4a" stroke-width="1"/>
<rect x="307.5" y="674.5" width="4" height="4" fill="none" stroke="#e04a4a" stroke-width="1"/>
<rect x="314.5" y="674.5" width="4" height="5" fill="none" stroke="#e04a4a" stroke-width="1"/>
<rect x="321.5" y="674.5" width="4" height="5" fill="none" stroke="#e04a4a" stroke-width="1"/>
<rect x="328.5" y="673.5" width="4" height="5" fill="none" stroke="#e04a4a" stroke-width="1"/>
<rect x="336.5" y="672.5" width="4" height="7" fill="none" stroke="#e04a4a" stroke-width="1"/>
<rect x="343.5" y="669.5" width="4" height="9" fill="none" stroke="#e04a4a" stroke-width="1"/>
<rect x="350.5" y="664.5" width="4" height="15" fill="none" stroke="#e04a4a" stroke-width="1"/>
<rect x="357.5" y="661.5" width="4" height="17" fill="none" stroke="#e04a4a" stroke-width="1"/>
<rect x="364.5" y="660.5" width="4" height="18" fill="none" stroke="#e04a4a" stroke-width="1"/>
<rect x="371.5" y="660.5" width="4" height="18" fill="none" stroke="#e04a4a" stroke-width="1"/>
<rect x="378.5" y="656.5" width="4" height="22" fill="none" stroke="#e04a4a" stroke-width="1"/>
<rect x="385.5" y="653.5" width="4" height="25" fill="none" stroke="#e04a4a" stroke-width="1"/>
<rect x="392.5" y="652.5" width="4" height="26" fill="none" stroke="#e04a4a" stroke-width="1"/>
<rect x="399" y="653" width="5" height="26" fill="#e04a4a"/>
<rect x="406" y="656" width="5" height="22" fill="#e04a4a"/>
<rect x="413" y="662" width="5" height="17" fill="#e04a4a"/>
<rect x="420" y="666" width="5" height="12" fill="#e04a4a"/>
<rect x="427" y="667" width="5" height="12" fill="#e04a4a"/>
<rect x="434" y="668" width="5" height="10" fill="#e04a4a"/>
<rect x="441" y="671" width="5" height="8" fill="#e04a4a"/>
<rect x="448.5" y="671.5" width="4" height="7" fill="none" stroke="#e04a4a" stroke-width="1"/>
<rect x="455.5" y="666.5" width="4" height="12" fill="none" stroke="#e04a4a" stroke-width="1"/>
<rect x="462.5" y="662.5" width="4" height="16" fill="none" stroke="#e04a4a" stroke-width="1"/>
<rect x="469.5" y="660.5" width="4" height="18" fill="none" stroke="#e04a4a" stroke-width="1"/>
<rect x="476.5" y="659.5" width="4" height="19" fill="none" stroke="#e04a4a" stroke-width="1"/>
<rect x="483.5" y="658.5" width="4" height="20" fill="none" stroke="#e04a4a" stroke-width="1"/>
<rect x="490" y="660" width="5" height="19" fill="#e04a4a"/>
<rect x="497" y="662" width="5" height="18" fill="#e04a4a"/>
<rect x="504.5" y="662.5" width="4" height="17" fill="none" stroke="#e04a4a" stroke-width="1"/>
<rect x="512.5" y="660.5" width="4" height="18" fill="none" stroke="#e04a4a" stroke-width="1"/>
<rect x="519" y="662" width="5" height="17" fill="#e04a4a"/>
<rect x="526" y="666" width="5" height="13" fill="#e04a4a"/>
<rect x="533" y="671" width="5" height="8" fill="#e04a4a"/>
<rect x="540" y="674" width="5" height="6" fill="#e04a4a"/>
<rect x="547.5" y="671.5" width="4" height="7" fill="none" stroke="#e04a4a" stroke-width="1"/>
<rect x="554.5" y="669.5" width="4" height="9" fill="none" stroke="#e04a4a" stroke-width="1"/>
<rect x="561" y="671" width="5" height="8" fill="#e04a4a"/>
<rect x="568" y="673" width="5" height="6" fill="#e04a4a"/>
<rect x="575" y="676" width="5" height="3" fill="#e04a4a"/>
<rect x="582" y="678" width="5" height="1" fill="#e04a4a"/>
<rect x="589.5" y="679.5" width="4" height="3" fill="none" stroke="#2cb48a" stroke-width="1"/>
<rect x="596.5" y="679.5" width="4" height="5" fill="none" stroke="#2cb48a" stroke-width="1"/>
<rect x="603.5" y="679.5" width="4" height="6" fill="none" stroke="#2cb48a" stroke-width="1"/>
<rect x="610" y="679" width="5" height="4" fill="#2cb48a"/>
<rect x="617" y="678" width="5" height="1" fill="#e04a4a"/>
<rect x="624" y="679" width="5" height="2" fill="#2cb48a"/>
<rect x="631.5" y="679.5" width="4" height="5" fill="none" stroke="#2cb48a" stroke-width="1"/>
<rect x="638.5" y="679.5" width="4" height="9" fill="none" stroke="#2cb48a" stroke-width="1"/>
<rect x="645.5" y="679.5" width="4" height="9" fill="none" stroke="#2cb48a" stroke-width="1"/>
<rect x="652" y="679" width="5" height="9" fill="#2cb48a"/>
<rect x="659.5" y="679.5" width="4" height="9" fill="none" stroke="#2cb48a" stroke-width="1"/>
<rect x="666" y="679" width="5" height="9" fill="#2cb48a"/>
<rect x="673" y="679" width="5" height="6" fill="#2cb48a"/>
<rect x="680" y="679" width="5" height="3" fill="#2cb48a"/>
<rect x="688.5" y="679.5" width="4" height="3" fill="none" stroke="#2cb48a" stroke-width="1"/>
<rect x="695.5" y="679.5" width="4" height="6" fill="none" stroke="#2cb48a" stroke-width="1"/>
<rect x="702.5" y="679.5" width="4" height="9" fill="none" stroke="#2cb48a" stroke-width="1"/>
<rect x="709.5" y="679.5" width="4" height="9" fill="none" stroke="#2cb48a" stroke-width="1"/>
<rect x="716.5" y="679.5" width="4" height="17" fill="none" stroke="#2cb48a" stroke-width="1"/>
<rect x="723.5" y="679.5" width="4" height="21" fill="none" stroke="#2cb48a" stroke-width="1"/>
<rect x="730.5" y="679.5" width="4" height="25" fill="none" stroke="#2cb48a" stroke-width="1"/>
<rect x="737.5" y="679.5" width="4" height="26" fill="none" stroke="#2cb48a" stroke-width="1"/>
<rect x="744" y="679" width="5" height="26" fill="#2cb48a"/>
<rect x="751" y="679" width="5" height="21" fill="#2cb48a"/>
<rect x="758" y="679" width="5" height="19" fill="#2cb48a"/>
<rect x="765" y="679" width="5" height="13" fill="#2cb48a"/>
<rect x="772" y="679" width="5" height="10" fill="#2cb48a"/>
<rect x="779.5" y="679.5" width="4" height="10" fill="none" stroke="#2cb48a" stroke-width="1"/>
<rect x="786.5" y="679.5" width="4" height="10" fill="none" stroke="#2cb48a" stroke-width="1"/>
<rect x="793" y="679" width="5" height="9" fill="#2cb48a"/>
<rect x="800.5" y="679.5" width="4" height="11" fill="none" stroke="#2cb48a" stroke-width="1"/>
<rect x="807.5" y="679.5" width="4" height="13" fill="none" stroke="#2cb48a" stroke-width="1"/>
<rect x="814" y="679" width="5" height="12" fill="#2cb48a"/>
<rect x="821" y="679" width="5" height="12" fill="#2cb48a"/>
<rect x="828" y="679" width="5" height="12" fill="#2cb48a"/>
<rect x="835" y="679" width="5" height="10" fill="#2cb48a"/>
<rect x="842.5" y="679.5" width="4" height="14" fill="none" stroke="#2cb48a" stroke-width="1"/>
<rect x="849.5" y="679.5" width="4" height="23" fill="none" stroke="#2cb48a" stroke-width="1"/>
<rect x="856.5" y="679.5" width="4" height="38" fill="none" stroke="#2cb48a" stroke-width="1"/>
<rect x="864.5" y="679.5" width="4" height="46" fill="none" stroke="#2cb48a" stroke-width="1"/>
<rect x="871.5" y="679.5" width="4" height="54" fill="none" stroke="#2cb48a" stroke-width="1"/>
<rect x="878" y="679" width="5" height="52" fill="#2cb48a"/>
<rect x="885" y="679" width="5" height="48" fill="#2cb48a"/>
<rect x="892" y="679" width="5" height="44" fill="#2cb48a"/>
<rect x="899" y="679" width="5" height="40" fill="#2cb48a"/>
<rect x="906" y="679" width="5" height="34" fill="#2cb48a"/>
<rect x="913" y="679" width="5" height="26" fill="#2cb48a"/>
<rect x="920" y="679" width="5" height="17" fill="#2cb48a"/>
<rect x="927" y="679" width="5" height="6" fill="#2cb48a"/>
<rect x="934.5" y="674.5" width="4" height="5" fill="none" stroke="#e04a4a" stroke-width="1"/>
<rect x="941.5" y="664.5" width="4" height="14" fill="none" stroke="#e04a4a" stroke-width="1"/>
<rect x="948.5" y="659.5" width="4" height="19" fill="none" stroke="#e04a4a" stroke-width="1"/>
<rect x="955.5" y="654.5" width="4" height="24" fill="none" stroke="#e04a4a" stroke-width="1"/>
<rect x="962.5" y="654.5" width="4" height="25" fill="none" stroke="#e04a4a" stroke-width="1"/>
<rect x="969" y="654" width="5" height="24" fill="#e04a4a"/>
<rect x="976.5" y="652.5" width="4" height="26" fill="none" stroke="#e04a4a" stroke-width="1"/>
<rect x="983" y="652" width="5" height="27" fill="#e04a4a"/>
<rect x="990" y="658" width="5" height="21" fill="#e04a4a"/>
<rect x="997" y="666" width="5" height="12" fill="#e04a4a"/>
<rect x="1004" y="674" width="5" height="6" fill="#e04a4a"/>
<rect x="1011.5" y="674.5" width="4" height="4" fill="none" stroke="#e04a4a" stroke-width="1"/>
<rect x="1018" y="674" width="5" height="6" fill="#e04a4a"/>
<rect x="1025.5" y="673.5" width="4" height="5" fill="none" stroke="#e04a4a" stroke-width="1"/>
<rect x="1032" y="674" width="5" height="4" fill="#e04a4a"/>
<rect x="1040.5" y="674.5" width="4" height="5" fill="none" stroke="#e04a4a" stroke-width="1"/>
<rect x="1047" y="676" width="5" height="3" fill="#e04a4a"/>
<rect x="1054" y="678" width="5" height="1" fill="#e04a4a"/>
<rect x="1061" y="679" width="5" height="1" fill="#2cb48a"/>
<rect x="1068" y="679" width="5" height="2" fill="#2cb48a"/>
<rect x="1075" y="679" width="5" height="1" fill="#2cb48a"/>
<rect x="1082" y="679" width="5" height="2" fill="#2cb48a"/>
<rect x="1089" y="678" width="5" height="1" fill="#e04a4a"/>
<rect x="1096.5" y="679.5" width="4" height="3" fill="none" stroke="#2cb48a" stroke-width="1"/>
<rect x="1103.5" y="679.5" width="4" height="8" fill="none" stroke="#2cb48a" stroke-width="1"/>
<rect x="1110.5" y="679.5" width="4" height="10" fill="none" stroke="#2cb48a" stroke-width="1"/>
<rect x="1117" y="679" width="5" height="8" fill="#2cb48a"/>
<rect x="1124.5" y="679.5" width="4" height="14" fill="none" stroke="#2cb48a" stroke-width="1"/>
<rect x="1131.5" y="679.5" width="4" height="17" fill="none" stroke="#2cb48a" stroke-width="1"/>
<rect x="1138" y="679" width="5" height="16" fill="#2cb48a"/>
<rect x="1145" y="679" width="5" height="13" fill="#2cb48a"/>
<rect x="1152" y="679" width="5" height="11" fill="#2cb48a"/>
<rect x="1159" y="679" width="5" height="6" fill="#2cb48a"/>
<rect x="1166" y="679" width="5" height="3" fill="#2cb48a"/>
<rect x="1173" y="678" width="5" height="1" fill="#e04a4a"/>
<rect x="1180.5" y="675.5" width="4" height="3" fill="none" stroke="#e04a4a" stroke-width="1"/>
<polyline points="70.0,688.0 78.0,693.5 93.0,698.0 108.0,699.2 125.5,698.5 140.5,699.8 155.5,699.0 168.0,694.8 178.0,692.2 190.5,691.5 203.0,693.0 213.0,696.0 223.0,700.5 235.5,704.0 248.0,706.5 263.0,706.5 275.5,704.8 288.0,703.0 298.0,702.2 308.0,699.8 323.0,697.2 338.0,694.0 345.5,692.2 353.0,687.2 363.0,682.2 373.0,678.5 383.0,672.2 393.0,666.0 403.0,661.5 413.0,661.0 423.0,662.2 435.5,660.2 450.5,659.2 460.5,654.8 470.5,649.8 483.0,643.5 493.0,639.8 503.0,637.2 515.5,632.8 525.5,631.8 538.0,633.0 547.5,631.8 557.5,629.2 572.5,629.2 582.5,631.5 592.5,634.8 606.2,637.8 620.0,635.2 627.5,636.0 640.0,641.0 655.0,643.5 668.8,645.5 682.5,643.5 695.0,645.5 705.0,649.0 711.2,650.5 720.0,656.0 730.0,663.5 740.0,670.2 747.5,672.2 760.0,673.0 772.5,672.2 785.0,674.8 797.5,676.0 807.5,679.8 817.5,681.8 827.5,684.0 840.0,684.8 850.0,692.2 857.5,704.8 865.0,716.0 872.5,728.5 880.0,733.5 890.0,738.5 900.0,743.0 910.0,745.0 920.0,743.5 927.5,741.0 937.5,733.5 947.5,723.0 960.0,713.5 972.5,708.0 980.0,703.0 987.5,699.8 993.8,699.8 1000.0,702.2 1007.5,705.5 1015.0,704.2 1020.0,704.2 1028.8,702.2 1037.5,703.5 1045.0,702.2 1052.5,702.2 1060.0,704.2 1072.5,705.2 1080.0,704.2 1086.2,705.2 1092.5,703.5 1102.5,708.5 1112.5,712.2 1121.2,712.2 1127.5,716.0 1135.0,721.5 1142.5,721.5 1150.0,722.5 1156.2,722.5 1162.5,720.5 1172.5,718.5 1183.8,715.2" fill="none" stroke="#c8c8c8" stroke-width="1.1" stroke-linejoin="round"/>
<polyline points="70.0,683.0 80.5,684.8 93.0,688.5 108.0,693.0 123.0,695.5 140.5,697.5 155.5,698.0 173.0,696.0 188.0,694.2 203.0,693.5 218.0,694.0 233.0,697.2 248.0,700.5 263.0,702.8 275.5,703.5 293.0,703.5 308.0,702.2 323.0,701.0 338.0,699.0 350.5,696.5 363.0,692.2 378.0,686.5 393.0,679.8 403.0,674.8 413.0,671.0 423.0,668.0 435.5,665.5 450.5,664.0 463.0,659.8 478.0,654.0 493.0,648.5 508.0,643.5 523.0,639.8 535.5,637.2 540.0,637.8 555.0,634.2 572.5,631.8 590.0,632.8 606.2,634.0 625.0,634.2 640.0,636.5 655.0,639.0 670.0,641.5 685.0,642.8 700.0,644.0 715.0,646.0 730.0,651.0 747.5,659.8 760.0,663.0 770.0,666.0 782.5,668.0 797.5,671.5 812.5,674.8 827.5,678.0 842.5,680.5 852.5,684.0 862.5,691.0 872.5,699.8 882.5,708.5 892.5,717.2 905.0,725.5 917.5,731.0 930.0,734.0 942.5,733.0 955.0,728.5 967.5,723.0 980.0,717.2 990.0,713.0 1002.5,708.5 1015.0,707.2 1025.0,706.0 1042.5,704.2 1065.0,704.2 1092.5,704.2 1105.0,706.0 1120.0,708.0 1130.0,711.0 1142.5,714.2 1155.0,717.2 1165.0,717.8 1175.0,718.0 1183.8,717.2" fill="none" stroke="#e4da2a" stroke-width="1.1" stroke-linejoin="round"/>
<line x1="71" y1="799.5" x2="1793" y2="799.5" stroke="#7d828c" stroke-width="1" stroke-dasharray="6 3"/>
<line x1="71" y1="828.5" x2="1793" y2="828.5" stroke="#7d828c" stroke-width="1" stroke-dasharray="6 3"/>
<line x1="71" y1="856.5" x2="1793" y2="856.5" stroke="#7d828c" stroke-width="1" stroke-dasharray="6 3"/>
<polyline points="70.5,854.2 77.5,853.0 84.6,853.0 91.6,856.8 98.7,859.2 105.7,855.5 112.7,849.2 119.8,846.0 126.8,842.5 133.9,850.5 140.9,849.2 147.9,855.0 155.0,841.8 162.0,823.0 169.1,814.2 176.1,808.5 183.1,806.0 190.2,813.5 197.2,825.5 204.3,838.5 211.3,841.8 218.3,848.0 225.4,855.0 232.4,856.2 239.5,858.8 246.5,861.0 253.5,862.5 260.6,861.0 267.6,855.5 274.7,851.8 281.7,845.5 288.7,841.8 295.8,838.0 302.8,835.0 309.9,831.2 316.9,835.5 323.9,828.5 331.0,830.5 338.0,815.5 345.1,804.2 352.1,798.0 359.1,796.8 366.2,795.5 373.2,793.8 380.3,792.2 387.3,789.2 394.3,787.2 401.4,787.2 408.4,793.0 415.5,805.5 422.5,814.2 429.5,808.0 436.6,806.8 443.6,806.8 450.7,801.8 457.7,795.5 464.7,791.8 471.8,792.5 478.8,789.2 485.9,789.2 492.9,791.8 499.9,792.5 507.0,789.2 514.0,786.8 521.1,788.0 528.1,791.8 535.1,799.2 542.2,801.8 549.2,795.5 556.3,798.0 563.3,803.0 570.3,806.8 577.4,810.0 584.4,813.5 591.5,816.8 598.5,818.0 605.5,816.0 612.6,811.0 619.6,808.0 626.7,815.0 633.7,825.5 640.7,834.2 647.8,833.0 654.8,830.0 661.9,832.5 668.9,828.0 675.9,819.2 683.0,812.2 690.0,814.2 697.1,818.5 704.1,827.5 711.1,829.2 718.2,838.8 725.2,845.5 732.3,850.5 739.3,854.2 746.3,855.5 753.4,846.8 760.4,844.2 767.5,834.2 774.5,828.5 781.5,831.0 788.6,837.2 795.6,834.2 802.7,843.0 809.7,844.2 816.7,841.8 823.8,842.5 830.8,844.2 837.9,840.5 844.9,848.0 851.9,854.8 859.0,846.2 866.0,839.2 873.1,838.0 880.1,835.0 887.1,833.5 894.2,833.5 901.2,834.2 908.3,832.5 915.3,826.8 922.3,823.0 929.4,813.0 936.4,805.0 943.5,801.8 950.5,799.8 957.5,796.0 964.6,799.2 971.6,803.0 978.7,797.5 985.7,796.0 992.7,816.8 999.8,834.2 1006.8,841.8 1013.9,837.5 1020.9,835.5 1027.9,833.0 1035.0,835.5 1042.0,834.8 1049.1,836.8 1056.1,841.2 1063.1,841.8 1070.2,844.2 1077.2,844.8 1084.3,850.5 1091.3,845.5 1098.3,853.0 1105.4,857.2 1112.4,858.5 1119.5,852.5 1126.5,859.2 1133.5,856.8 1140.6,851.0 1147.6,848.0 1154.7,846.2 1161.7,836.8 1168.7,833.0 1175.8,827.2 1182.8,822.5" fill="none" stroke="#c8c8c8" stroke-width="1.1" stroke-linejoin="round"/>
<polyline points="70.5,847.5 77.5,849.2 84.6,850.5 91.6,852.5 98.7,853.8 105.7,854.8 112.7,853.0 119.8,850.5 126.8,847.5 133.9,848.5 140.9,849.2 147.9,850.5 155.0,848.0 162.0,840.0 169.1,831.8 176.1,824.2 183.1,818.8 190.2,816.8 197.2,820.0 204.3,826.0 211.3,830.5 218.3,836.8 225.4,843.0 232.4,847.2 239.5,851.2 246.5,854.2 253.5,856.8 260.6,858.5 267.6,857.5 274.7,855.5 281.7,852.5 288.7,849.2 295.8,845.5 302.8,842.2 309.9,838.5 316.9,837.2 323.9,834.2 331.0,833.0 338.0,827.5 345.1,820.0 352.1,812.5 359.1,807.5 366.2,804.2 373.2,801.0 380.3,798.0 387.3,795.0 394.3,792.5 401.4,791.2 408.4,791.8 415.5,796.2 422.5,801.8 429.5,804.2 436.6,805.5 443.6,805.5 450.7,804.2 457.7,801.2 464.7,798.0 471.8,796.2 478.8,793.8 485.9,792.5 492.9,792.5 499.9,792.5 507.0,791.2 514.0,789.2 521.1,789.2 528.1,790.0 535.1,793.0 542.2,795.0 549.2,795.0 556.3,795.5 563.3,798.0 570.3,801.0 577.4,804.2 584.4,807.5 591.5,810.5 598.5,813.0 605.5,813.5 612.6,812.5 619.6,811.2 626.7,812.5 633.7,816.8 640.7,822.5 647.8,826.0 654.8,827.5 661.9,829.2 668.9,828.5 675.9,825.5 683.0,821.2 690.0,819.2 697.1,818.8 704.1,821.8 711.1,824.2 718.2,829.2 725.2,834.8 732.3,840.0 739.3,845.0 746.3,848.5 753.4,848.0 760.4,846.8 767.5,842.5 774.5,838.0 781.5,836.0 788.6,836.2 795.6,835.5 802.7,838.0 809.7,840.0 816.7,840.5 823.8,841.2 830.8,842.5 837.9,841.8 844.9,843.8 851.9,847.5 859.0,847.2 866.0,844.5 873.1,842.5 880.1,840.0 887.1,837.5 894.2,836.2 901.2,835.5 908.3,834.2 915.3,831.8 922.3,828.8 929.4,823.5 936.4,817.2 943.5,812.2 950.5,808.0 957.5,804.2 964.6,802.2 971.6,803.0 978.7,801.0 985.7,799.2 992.7,805.5 999.8,815.0 1006.8,824.2 1013.9,828.5 1020.9,831.0 1027.9,831.8 1035.0,833.0 1042.0,833.8 1049.1,835.0 1056.1,837.2 1063.1,839.2 1070.2,841.0 1077.2,842.2 1084.3,844.8 1091.3,845.0 1098.3,848.0 1105.4,851.0 1112.4,853.0 1119.5,852.5 1126.5,855.0 1133.5,855.5 1140.6,854.2 1147.6,851.8 1154.7,849.8 1161.7,846.0 1168.7,841.2 1175.8,836.8 1182.8,831.8" fill="none" stroke="#e4da2a" stroke-width="1.1" stroke-linejoin="round"/>
<polyline points="70.5,865.0 77.5,859.2 84.6,855.5 91.6,858.0 98.7,862.5 105.7,860.0 112.7,843.5 119.8,837.2 126.8,830.5 133.9,853.0 140.9,851.8 147.9,858.0 155.0,828.0 162.0,793.0 169.1,784.2 176.1,780.0 183.1,784.2 190.2,805.5 197.2,835.5 204.3,864.2 211.3,863.5 218.3,870.5 225.4,879.2 232.4,873.0 239.5,871.8 246.5,873.0 253.5,871.8 260.6,868.0 267.6,853.0 274.7,846.8 281.7,831.8 288.7,828.0 295.8,824.2 302.8,821.8 309.9,816.0 316.9,831.8 323.9,818.5 331.0,825.5 338.0,789.2 345.1,774.2 352.1,770.5 359.1,776.8 366.2,782.2 373.2,782.2 380.3,781.2 387.3,778.5 394.3,776.2 401.4,780.5 408.4,794.2 415.5,823.0 422.5,837.2 429.5,815.0 436.6,810.5 443.6,810.5 450.7,796.8 457.7,783.0 464.7,780.0 471.8,784.2 478.8,779.2 485.9,784.2 492.9,790.5 499.9,793.0 507.0,783.0 514.0,781.0 521.1,785.5 528.1,795.5 535.1,811.8 542.2,811.8 549.2,794.2 556.3,799.2 563.3,808.0 570.3,815.5 577.4,818.0 584.4,823.0 591.5,828.5 598.5,827.5 605.5,823.0 612.6,808.0 619.6,802.5 626.7,823.0 633.7,843.0 640.7,856.2 647.8,845.5 654.8,834.2 661.9,838.0 668.9,826.8 675.9,806.8 683.0,795.0 690.0,804.2 697.1,816.8 704.1,838.0 711.1,839.2 718.2,860.5 725.2,866.8 732.3,873.0 739.3,873.0 746.3,868.8 753.4,842.5 760.4,840.5 767.5,819.2 774.5,811.8 781.5,823.0 788.6,840.5 795.6,829.2 802.7,853.0 809.7,853.0 816.7,841.8 823.8,845.0 830.8,847.5 837.9,836.8 844.9,856.8 851.9,868.5 859.0,844.2 866.0,830.5 873.1,831.0 880.1,825.5 887.1,824.2 894.2,827.5 901.2,830.5 908.3,827.5 915.3,816.8 922.3,813.5 929.4,793.0 936.4,779.2 943.5,778.0 950.5,783.0 957.5,780.5 964.6,794.2 971.6,804.2 978.7,789.2 985.7,791.0 992.7,843.0 999.8,874.2 1006.8,876.2 1013.9,854.2 1020.9,844.2 1027.9,833.0 1035.0,840.5 1042.0,836.8 1049.1,840.0 1056.1,851.0 1063.1,846.8 1070.2,853.0 1077.2,849.8 1084.3,862.5 1091.3,845.0 1098.3,864.2 1105.4,870.5 1112.4,868.5 1119.5,849.2 1126.5,867.2 1133.5,858.0 1140.6,844.2 1147.6,839.8 1154.7,838.5 1161.7,818.8 1168.7,815.0 1175.8,806.8 1182.8,804.5" fill="none" stroke="#e045b4" stroke-width="1.1" stroke-linejoin="round"/>
</g>
<rect x="66" y="500" width="7" height="38" rx="2" fill="#33353d"/>
<path d="M68 515 l4 4.1 l-4 4.1z" fill="#8a8d9a"/>
<path d="M673 215.5 h6 M676.8 213.3 l2.4 2.2 l-2.4 2.2" fill="none" stroke="#9a9a9a" stroke-width="1"/>
<path d="M848.5 584.5 h6.5 M852.8 582.3 l2.4 2.2 l-2.4 2.2" fill="none" stroke="#d0d0d0" stroke-width="1"/>
<defs><linearGradient id="av" x1="0" y1="0" x2="0" y2="1"><stop offset="0" stop-color="#f6f7f8"/><stop offset="0.55" stop-color="#e9ebee"/><stop offset="1" stop-color="#9fa2a7"/></linearGradient></defs>
<rect x="13" y="10" width="16" height="16" rx="0" fill="url(#av)" stroke="none" stroke-width="1.2" />
<path d="M13 25.5 L18 23.5 L21.5 21 L24 16.5 L25.2 20 L27 22.5 L29 24 L29 26 L13 26z" fill="#55585d" opacity="0.8"/>
<defs><linearGradient id="vb" x1="0" y1="0" x2="1" y2="0"><stop offset="0" stop-color="#0e0f12"/><stop offset="1" stop-color="#2a2c33"/></linearGradient></defs>
<path d="M119 7 H183 L177 29 H113z" fill="url(#vb)"/>
<path d="M124 13.5 h8 l2.8 3.6 l-6.8 6.9 l-6.8 -6.9z" fill="#7d808c"/>
<path d="M126 16.6 h4" stroke="#17181c" stroke-width="1.3"/>
<rect x="1408.5" y="4.5" width="199" height="27" rx="2" fill="#16171b" stroke="#2c2e35" stroke-width="1" />
<circle cx="1424" cy="17.8" r="4.7" fill="none" stroke="#a3a8b8" stroke-width="1.4"/>
<path d="M1427.5 21.4 L1430 23.9" fill="none" stroke="#a3a8b8" stroke-width="1.4" stroke-linecap="round" stroke-linejoin="round" />
<rect x="1583" y="11" width="16" height="15" rx="2" fill="#2a2c33" stroke="none" stroke-width="1.2" />
<path d="M1626.6 21.6 h15 M1628.8 21.4 v-5.6 a5.3 5.3 0 0 1 10.6 0 v5.6" fill="none" stroke="#a3a8b8" stroke-width="1.6" stroke-linecap="round" stroke-linejoin="round" />
<path d="M1630.4 22.8 a3.8 3.6 0 0 0 7.4 0" fill="none" stroke="#a3a8b8" stroke-width="1.6" stroke-linecap="round" stroke-linejoin="round" />
<rect x="1660.5" y="7.5" width="59" height="21" rx="3" fill="#050506" stroke="#202228" stroke-width="1" />
<path d="M1700.5 16.5 h7 l-3.5 3.6z" fill="#a3a8b8"/>
<rect x="1737.8" y="11.2" width="18.6" height="13.8" rx="0" fill="none" stroke="#a3a8b8" stroke-width="1.7" />
<path d="M1741 13.8 l6.2 4.2 l6.2 -4.2" fill="none" stroke="#a3a8b8" stroke-width="1.7" stroke-linecap="round" stroke-linejoin="round" />
<line x1="1788.5" y1="10" x2="1788.5" y2="26" stroke="#2c2e35" stroke-width="1"/>
<path d="M1812.5 11.3 h-6.4 v13.6 h14 v-6.4" fill="none" stroke="#a3a8b8" stroke-width="1.7" stroke-linecap="round" stroke-linejoin="round" />
<rect x="1815.3" y="11.3" width="4.8" height="4.6" rx="0" fill="none" stroke="#a3a8b8" stroke-width="1.5" />
<path d="M1836.5 22.9 h13" fill="none" stroke="#a3a8b8" stroke-width="1.7" stroke-linecap="round" stroke-linejoin="round" />
<path d="M1864.8 15.5 v-3.5 h3.5 M1873 12 h3.5 v3.5 M1876.5 20.5 v3.5 h-3.5 M1868.3 24 h-3.5 v-3.5" fill="none" stroke="#a3a8b8" stroke-width="1.7" stroke-linecap="round" stroke-linejoin="round" />
<path d="M1893.3 12.2 l11 11 M1904.3 12.2 l-11 11" fill="none" stroke="#a3a8b8" stroke-width="1.6" stroke-linecap="round" stroke-linejoin="round" />
<circle cx="86" cy="49" r="7.2" fill="#fff" stroke="none" stroke-width="1.2"/>
<path d="M86 43.8 l5.2 5.2 l-5.2 5.2 l-5.2 -5.2z M86 46.3 l-2.7 2.7 l2.7 2.7 l2.7 -2.7z" fill="#f5b11c" fill-rule="evenodd"/>
<path d="M86 47.7 l1.3 1.3 l-1.3 1.3 l-1.3 -1.3z" fill="#f5b11c"/>
<path d="M82.6 47 l1 1 M89.4 47 l-1 1 M82.6 51 l1 -1 M89.4 51 l-1 -1" stroke="#fff" stroke-width="0.9"/>
<rect x="85.8" y="87.2" width="10.6" height="10.2" rx="2" fill="none" stroke="#959aa8" stroke-width="1.1" />
<path d="M87.8 94.2 l2.3 -2.6 l1.8 1.4 l2.6 -3" fill="none" stroke="#959aa8" stroke-width="1" stroke-linecap="round" stroke-linejoin="round" />
<rect x="147.8" y="90.2" width="10" height="6.8" rx="1" fill="none" stroke="#959aa8" stroke-width="1.1" />
<path d="M150.5 90 v-1.6 h4.6 v1.6 M148 92.8 h9.6" fill="none" stroke="#959aa8" stroke-width="1" stroke-linecap="round" stroke-linejoin="round" />
<rect x="209.6" y="87.8" width="3.6" height="9.6" rx="1" fill="none" stroke="#959aa8" stroke-width="1.1" />
<rect x="216" y="87.8" width="3.4" height="3.4" rx="1" fill="none" stroke="#959aa8" stroke-width="1.1" />
<rect x="216" y="94" width="3.4" height="3.4" rx="1" fill="none" stroke="#959aa8" stroke-width="1.1" />
<path d="M274.5 87.8 l-5 4.8 l5 4.8z M281.3 87.8 l-5 4.8 l5 4.8z" fill="none" stroke="#c9ccd4" stroke-width="1.1" stroke-linecap="round" stroke-linejoin="round" />
<path d="M331 88 v9.5 M335.3 85 v15 M339.8 87 v11" fill="none" stroke="#c9ccd4" stroke-width="1" stroke-linecap="round" stroke-linejoin="round" />
<rect x="329.7" y="89.8" width="2.6" height="5.6" rx="1" fill="none" stroke="#c9ccd4" stroke-width="1" />
<rect x="334" y="87.5" width="2.6" height="10" rx="1" fill="none" stroke="#c9ccd4" stroke-width="1" />
<rect x="338.5" y="89.3" width="2.6" height="6.4" rx="1" fill="none" stroke="#c9ccd4" stroke-width="1" />
<path d="M350.8 91 l4 3.8 l4 -3.8" fill="none" stroke="#7d818e" stroke-width="1.1" stroke-linecap="round" stroke-linejoin="round" />
<path d="M407 91 l4 3.8 l4 -3.8" fill="none" stroke="#7d818e" stroke-width="1.1" stroke-linecap="round" stroke-linejoin="round" />
<path d="M1494.5 89.8 h2.6 l1.2 -1.8 h4.4 l1.2 1.8 h2.6 v7.6 h-12z" fill="none" stroke="#7d818e" stroke-width="1.1" stroke-linecap="round" stroke-linejoin="round" />
<circle cx="1500.5" cy="93.3" r="2.2" fill="none" stroke="#7d818e" stroke-width="1.1"/>
<path d="M1525.5 96.5 l0.6 -3 l6.6 -6.6 l2.4 2.4 l-6.6 6.6z M1529 98.2 h6.5" fill="none" stroke="#2b8cff" stroke-width="1.3" stroke-linecap="round" stroke-linejoin="round" />
<path d="M1556.4 93 v-4 a1.4 1.4 0 0 1 1.4 -1.4 h6.8 a1.4 1.4 0 0 1 1.4 1.4 v7 a1.4 1.4 0 0 1 -1.4 1.4 h-3.6" fill="none" stroke="#7d818e" stroke-width="1.1" stroke-linecap="round" stroke-linejoin="round" />
<path d="M1555.4 95.7 h4.6 M1557.7 93.6 v4.2" fill="none" stroke="#7d818e" stroke-width="1.1" stroke-linecap="round" stroke-linejoin="round" />
<path d="M1586.5 89 h6.5 M1586.5 92.8 h6.5 M1586.5 96.6 h6.5 M1595.3 89 h0.8 M1595.3 92.8 h0.8 M1595.3 96.6 h0.8" fill="none" stroke="#7d818e" stroke-width="1.2" stroke-linecap="round" stroke-linejoin="round" />
<path d="M1650 86.6 l5.4 3.1 v6.2 l-5.4 3.1 l-5.4 -3.1 v-6.2z" fill="none" stroke="#7d818e" stroke-width="1.1" stroke-linecap="round" stroke-linejoin="round" />
<circle cx="1650" cy="92.8" r="2.1" fill="none" stroke="#7d818e" stroke-width="1.1"/>
<path d="M1675.6 90.6 v-2.4 h2.4 M1682.2 88.2 h2.4 v2.4 M1684.6 95.2 v2.4 h-2.4 M1678 97.6 h-2.4 v-2.4 M1675.9 88.5 l2.7 2.7 M1684.3 88.5 l-2.7 2.7 M1684.3 97.3 l-2.7 -2.7 M1675.9 97.3 l2.7 -2.7" fill="none" stroke="#7d818e" stroke-width="1" stroke-linecap="round" stroke-linejoin="round" />
<line x1="1695.5" y1="77" x2="1695.5" y2="108" stroke="#26282d" stroke-width="1"/>
<path d="M1707.5 97.5 a3.4 3.4 0 0 1 -0.6 -6.7 a4.6 4.6 0 0 1 8.8 -0.6 a3.7 3.7 0 0 1 -0.2 7.3z M1708.8 93.4 l1.9 1.9 l3.8 -3.8" fill="none" stroke="#7d818e" stroke-width="1.1" stroke-linecap="round" stroke-linejoin="round" />
<path d="M1764.4 91 l3.8 3.6 l3.8 -3.6" fill="none" stroke="#7d818e" stroke-width="1.1" stroke-linecap="round" stroke-linejoin="round" />
<defs><linearGradient id="ai" x1="0" y1="0" x2="1" y2="0"><stop offset="0" stop-color="#17cdb2"/><stop offset="0.45" stop-color="#2a7df2"/><stop offset="1" stop-color="#c22fe2"/></linearGradient></defs>
<path d="M1791 83 H1836 L1834 97 Q1833 103 1827 103 H1783 V91 Q1783 83 1791 83z" fill="url(#ai)"/>
<circle cx="1854.8" cy="87.3" r="2.1" fill="none" stroke="#2b8cff" stroke-width="1.2"/>
<circle cx="1854.8" cy="98.3" r="2.1" fill="none" stroke="#2b8cff" stroke-width="1.2"/>
<circle cx="1846.3" cy="92.8" r="2.1" fill="none" stroke="#2b8cff" stroke-width="1.2"/>
<path d="M1848.2 91.7 l4.8 -3.3 M1848.2 93.9 l4.8 3.3" fill="none" stroke="#2b8cff" stroke-width="1.2" stroke-linecap="round" stroke-linejoin="round" />
<path d="M86.5 130.5 L98 119.5 M85 129 l3 3 M96.5 118 l3 3" fill="none" stroke="#b9bdc8" stroke-width="1.3" stroke-linecap="round" stroke-linejoin="round" />
<path d="M116 120.4 h16 M116 125.1 h16 M116 130 h16 M124 119 v2.8 M124 128.6 v2.8" fill="none" stroke="#b9bdc8" stroke-width="1.3" stroke-linecap="round" stroke-linejoin="round" />
<path d="M148 120.4 h16 M148 125.1 h16 M148 130 h16 M163.5 128.8 v2.4" fill="none" stroke="#b9bdc8" stroke-width="1.3" stroke-linecap="round" stroke-linejoin="round" />
<path d="M180.3 125.1 h15.8 M187.3 122.6 v5" fill="none" stroke="#b9bdc8" stroke-width="1.3" stroke-linecap="round" stroke-linejoin="round" />
<rect x="212.3" y="119.2" width="15.2" height="12.2" rx="1.2" fill="none" stroke="#b9bdc8" stroke-width="1.3" />
<circle cx="247" cy="125.1" r="1.35" fill="#d0d3da" stroke="none" stroke-width="1.2"/>
<circle cx="251.7" cy="125.1" r="1.35" fill="#d0d3da" stroke="none" stroke-width="1.2"/>
<circle cx="256.6" cy="125.1" r="1.35" fill="#d0d3da" stroke="none" stroke-width="1.2"/>
<circle cx="265.2" cy="119.6" r="2.9" fill="#f4522d" stroke="none" stroke-width="1.2"/>
<line x1="275.5" y1="119.5" x2="275.5" y2="131" stroke="#3a2a22" stroke-width="1"/>
<path d="M388 124 v-3.5 a2.5 2.5 0 0 1 2.5 -2.5 h8 M396.5 116 l2.2 2 l-2.2 2 M400.5 126 v3.5 a2.5 2.5 0 0 1 -2.5 2.5 h-8 M392 134 l-2.2 -2 l2.2 -2" fill="none" stroke="#9ba0b0" stroke-width="1.1" stroke-linecap="round" stroke-linejoin="round" />
<path d="M391.5 128.5 l0.5 -2.2 l4 -4 l1.7 1.7 l-4 4z M394.5 128.8 h2.5" fill="none" stroke="#9ba0b0" stroke-width="1" stroke-linecap="round" stroke-linejoin="round" />
<path d="M419.5 130.5 l10 -11 M418.5 129.5 l2.2 2.2 M421.5 126.5 l2 2" fill="none" stroke="#9ba0b0" stroke-width="1.1" stroke-linecap="round" stroke-linejoin="round" />
<path d="M428 126.5 l3 3 l-3 3z M434.5 126.5 l-3 3 l3 3z" fill="#9ba0b0"/>
<line x1="449.5" y1="119.5" x2="449.5" y2="131" stroke="#2c2e35" stroke-width="1"/>
<path d="M470.8 120.5 h8 v11.5 l-4 -3.2 l-4 3.2z" fill="none" stroke="#2b8cff" stroke-width="1.5" stroke-linecap="round" stroke-linejoin="round" />
<path d="M467.3 127.5 v-10 h8.5" fill="none" stroke="#2b8cff" stroke-width="1.5" stroke-linecap="round" stroke-linejoin="round" />
<path d="M497.5 128 l10.5 -10.5 l4.5 4.5 l-10.5 10.5z M501 124.5 l1.8 1.8 M503.6 121.9 l1.8 1.8 M506.2 119.3 l1.8 1.8" fill="none" stroke="#9ba0b0" stroke-width="1.1" stroke-linecap="round" stroke-linejoin="round" />
<path d="M530 131 l-0.4 -3 l7.4 -7.6 a2.1 2.1 0 0 1 3 3 l-7.4 7.6z M539.5 130.5 q1.5 -3 3 0 t3 -1" fill="none" stroke="#9ba0b0" stroke-width="1.1" stroke-linecap="round" stroke-linejoin="round" />
<path d="M563.5 118 v14 M569.2 118 v14 M575 118 v14" fill="none" stroke="#9ba0b0" stroke-width="1.1" stroke-linecap="round" stroke-linejoin="round" />
<rect x="562" y="120.5" width="3" height="8.5" rx="0" fill="#0d0e11" stroke="#9ba0b0" stroke-width="1.1" />
<rect x="567.7" y="122" width="3" height="7" rx="0" fill="#0d0e11" stroke="#9ba0b0" stroke-width="1.1" />
<rect x="573.5" y="120.5" width="3" height="8.5" rx="0" fill="#0d0e11" stroke="#9ba0b0" stroke-width="1.1" />
<rect x="594.3" y="124" width="14" height="8" rx="1" fill="none" stroke="#9ba0b0" stroke-width="1.2" />
<path d="M597.3 124 v-3 a3.4 3.4 0 0 1 6.6 -1.2" fill="none" stroke="#9ba0b0" stroke-width="1.2" stroke-linecap="round" stroke-linejoin="round" />
<rect x="600.4" y="127" width="1.8" height="1.8" rx="0" fill="#9ba0b0" stroke="none" stroke-width="1.2" />
<path d="M638.5 123 v-4 a1.3 1.3 0 0 0 -1.3 -1.3 h-10.5 a1.3 1.3 0 0 0 -1.3 1.3 v10.5 a1.3 1.3 0 0 0 1.3 1.3 h5 M628.5 121.7 h7 M628.5 125.3 h4" fill="none" stroke="#9ba0b0" stroke-width="1.1" stroke-linecap="round" stroke-linejoin="round" />
<path d="M634 131.5 l0.4 -2.2 l4.4 -4.4 l1.8 1.8 l-4.4 4.4z" fill="none" stroke="#9ba0b0" stroke-width="1" stroke-linecap="round" stroke-linejoin="round" />
<path d="M657.5 125.5 l5.2 -5.2 a4.6 4.6 0 0 1 6.6 6.6 l-5.2 5.2 l-2.6 -2.6 l5.2 -5.2 a1 1 0 0 0 -1.4 -1.4 l-5.2 5.2z M659.6 123.4 l2.6 2.6 M662 129.6 l2.6 2.6" fill="none" stroke="#9ba0b0" stroke-width="1.1" stroke-linecap="round" stroke-linejoin="round" />
<path d="M689.5 118.5 h14 l-5.4 6.5 v7 l-3.2 -2 v-5z" fill="none" stroke="#9ba0b0" stroke-width="1.2" stroke-linecap="round" stroke-linejoin="round" />
<path d="M722.5 120.3 h13 M726.5 120 v-2 h5 v2 M724 120.5 v11 h10 v-11 M727.3 123.5 v5 M730.7 123.5 v5" fill="none" stroke="#9ba0b0" stroke-width="1.3" stroke-linecap="round" stroke-linejoin="round" />
<path d="M754 124 l3.5 -3 M754 124 l3.5 3 M754 124 h7.5 a3.5 3.5 0 0 1 3.5 3.5 v1" fill="none" stroke="#3d4048" stroke-width="1.1" stroke-linecap="round" stroke-linejoin="round" />
<path d="M798 124 l-3.5 -3 M798 124 l-3.5 3 M798 124 h-7.5 a3.5 3.5 0 0 0 -3.5 3.5 v1" fill="none" stroke="#3d4048" stroke-width="1.1" stroke-linecap="round" stroke-linejoin="round" />
<circle cx="89" cy="152.5" r="6.2" fill="none" stroke="#5d616b" stroke-width="1"/>
<path d="M88 150 l2.5 2.5 l-2.5 2.5" fill="none" stroke="#5d616b" stroke-width="1" stroke-linecap="round" stroke-linejoin="round" />
<circle cx="89" cy="170.5" r="6.2" fill="none" stroke="#5d616b" stroke-width="1"/>
<path d="M86.3 169.5 l2.7 2.5 l2.7 -2.5" fill="none" stroke="#5d616b" stroke-width="1" stroke-linecap="round" stroke-linejoin="round" />
<circle cx="89" cy="619" r="6.2" fill="none" stroke="#5d616b" stroke-width="1"/>
<path d="M86.3 618 l2.7 2.5 l2.7 -2.5" fill="none" stroke="#5d616b" stroke-width="1" stroke-linecap="round" stroke-linejoin="round" />
<circle cx="89" cy="760" r="6.2" fill="none" stroke="#5d616b" stroke-width="1"/>
<path d="M86.3 759 l2.7 2.5 l2.7 -2.5" fill="none" stroke="#5d616b" stroke-width="1" stroke-linecap="round" stroke-linejoin="round" />
<path d="M105.0 620.5 h9 M106.2 620.5 v-3.6 a3.3 3.3 0 0 1 6.6 0 v3.6 M108.5 622.1 a1 1 0 0 0 2 0" fill="none" stroke="#7d828c" stroke-width="1" stroke-linecap="round" stroke-linejoin="round" />
<path d="M105.0 761.5 h9 M106.2 761.5 v-3.6 a3.3 3.3 0 0 1 6.6 0 v3.6 M108.5 763.1 a1 1 0 0 0 2 0" fill="none" stroke="#7d828c" stroke-width="1" stroke-linecap="round" stroke-linejoin="round" />
<path d="M85.9 855.9 a5.9 5.9 0 1 0 0 11.8 h5.9 v-5.9 a5.9 5.9 0 0 0 -5.9 -5.9z M85.9 859.1 a2.7 2.7 0 1 1 0 5.4 a2.7 2.7 0 0 1 0 -5.4z" fill="#ffffff" fill-rule="evenodd"/>
<path d="M98.3 861.3 a4.6 4.6 0 0 0 0.6 8.6" fill="none" stroke="#ffffff" stroke-width="2.6" stroke-linecap="round" stroke-linejoin="round" />
<circle cx="94.9" cy="857.1" r="2" fill="#d8301a" stroke="none" stroke-width="1.2"/>
<circle cx="32.9" cy="72.8" r="9.6" fill="none" stroke="#5d616b" stroke-width="1"/>
<path d="M29.6 69.5 a3.1 3.1 0 1 0 0.1 0z M32.3 75.6 l-0.9 -2.4" fill="none" stroke="#6b6f79" stroke-width="1.7" stroke-linecap="round" stroke-linejoin="round" />
<path d="M37.6 72.2 a3 3 0 0 0 -0.6 5" fill="none" stroke="#6b6f79" stroke-width="1.7" stroke-linecap="round" stroke-linejoin="round" />
<circle cx="35.8" cy="69.2" r="1.2" fill="#e8502a" stroke="none" stroke-width="1.2"/>
<rect x="23.1" y="144.4" width="5.5" height="6.6" rx="0.6" fill="#c9ccd2" stroke="none" stroke-width="1.2" />
<rect x="30" y="135.1" width="6.1" height="15.9" rx="0.6" fill="#c9ccd2" stroke="none" stroke-width="1.2" />
<rect x="37.6" y="138.9" width="5.4" height="12.1" rx="0.6" fill="#c9ccd2" stroke="none" stroke-width="1.2" />
<rect x="23.1" y="151.9" width="19.9" height="2.9" rx="0.5" fill="#1890ff" stroke="none" stroke-width="1.2" />
<rect x="28" y="207.1" width="15" height="19.7" rx="1" fill="#53565e" stroke="none" stroke-width="1.2" />
<defs><linearGradient id="g1" x1="0" y1="0" x2="1" y2="0"><stop offset="0" stop-color="#8a8d98"/><stop offset="1" stop-color="#63666f"/></linearGradient></defs>
<rect x="23.1" y="212" width="9" height="13.9" rx="0.5" fill="url(#g1)" stroke="none" stroke-width="1.2" />
<path d="M30.5 211.9 h9.2 M30.5 216.5 h3.5 M30.5 220.8 h3.5" fill="none" stroke="#0e0f12" stroke-width="1.5" stroke-linecap="round" stroke-linejoin="round" stroke-linecap="butt"/>
<path d="M39.2 215.5 l-2.2 3.6 h1.7 l-0.9 2.8 l2.6 -3.9 h-1.7z" fill="#0e0f12"/>
<path d="M24.6 279.1 h8.2 l5.1 5.2 v13 a1.5 1.5 0 0 1 -1.5 1.5 h-11.8 a1.5 1.5 0 0 1 -1.5 -1.5 v-16.7 a1.5 1.5 0 0 1 1.5 -1.5z" fill="#53565e"/>
<rect x="33.8" y="287.5" width="9.2" height="11.3" rx="1" fill="#8a8e9a" stroke="none" stroke-width="1.2" />
<path d="M26 288.4 h6.7 M26 292 h5.2" fill="none" stroke="#0e0f12" stroke-width="1.4" stroke-linecap="round" stroke-linejoin="round" stroke-linecap="butt"/>
<rect x="24.8" y="355.2" width="16.5" height="15.6" rx="1" fill="#53565e" stroke="none" stroke-width="1.2" />
<rect x="23.1" y="359.5" width="2.3" height="4.3" rx="0" fill="#7d808a" stroke="none" stroke-width="1.2" />
<rect x="40.7" y="359.5" width="2.3" height="4.3" rx="0" fill="#7d808a" stroke="none" stroke-width="1.2" />
<rect x="28" y="351.1" width="9.6" height="2" rx="1" fill="#7d808a" stroke="none" stroke-width="1.2" />
<rect x="31.8" y="352" width="2" height="3.4" rx="0" fill="#7d808a" stroke="none" stroke-width="1.2" />
<circle cx="29.2" cy="360.4" r="1.5" fill="#0e0f12" stroke="none" stroke-width="1.2"/>
<circle cx="36.7" cy="360.4" r="1.5" fill="#0e0f12" stroke="none" stroke-width="1.2"/>
<path d="M30.9 364.2 h4 a2 2 0 0 1 -4 0z" fill="#0e0f12"/>
<circle cx="36.9" cy="428.9" r="6.1" fill="#4a4d55" stroke="none" stroke-width="1.2"/>
<circle cx="29.5" cy="435.9" r="6.5" fill="#666a74" stroke="none" stroke-width="1.2"/>
<circle cx="36.9" cy="428.9" r="6.1" fill="#7d808a" opacity="0.35"/>
<path d="M26.6 438.5 v-2.4 M29.5 438.5 v-4.6 M32.4 438.5 v-3.4" fill="none" stroke="#3a3d45" stroke-width="1.5" stroke-linecap="round" stroke-linejoin="round" stroke-linecap="butt"/>
<path d="M23.2 423.2 h5.7 l-5.7 5.7z" fill="#7d808a"/><path d="M42.9 442.9 h-5.7 l5.7 -5.7z" fill="#7d808a"/>
<path d="M23.2 499.4 L38.4 495.3 L39.7 499.4z" fill="#7d808a"/>
<rect x="23.2" y="499.4" width="19.7" height="15.2" rx="1" fill="#53565e" stroke="none" stroke-width="1.2" />
<rect x="34" y="504.7" width="8.9" height="5.5" rx="1" fill="#0e0f12" stroke="none" stroke-width="1.2" />
<rect x="35.2" y="505.8" width="7.7" height="3.3" rx="0.5" fill="#7d808a" stroke="none" stroke-width="1.2" />
<rect x="38" y="506.8" width="2" height="1.3" rx="0" fill="#0e0f12" stroke="none" stroke-width="1.2" />
<rect x="23.2" y="567" width="17.8" height="16" rx="1" fill="#53565e" stroke="none" stroke-width="1.2" />
<path d="M28.9 572.8 h14 v12.7 l-3 -2.5 h-11z" fill="#7d808a"/>
<path d="M28.6 574.3 a3.6 3.6 0 0 0 6.8 0" fill="none" stroke="#0e0f12" stroke-width="1.5" stroke-linecap="round" stroke-linejoin="round" />
<rect x="23.2" y="638.9" width="19.7" height="19.7" rx="2" fill="#53565e" stroke="none" stroke-width="1.2" />
<path d="M25.2 638.9 h8.8 v19.7 h-8.8 a2 2 0 0 1 -2 -2 v-15.7 a2 2 0 0 1 2 -2z" fill="#7d808a"/>
<circle cx="28" cy="649.3" r="2.7" fill="none" stroke="#0e0f12" stroke-width="1.6"/>
<path d="M30.8 649.3 h9.5 M37.8 649.3 v-3.2" fill="none" stroke="#0e0f12" stroke-width="1.6" stroke-linecap="round" stroke-linejoin="round" stroke-linecap="butt"/>
<rect x="23.6" y="711.5" width="18.8" height="15.2" rx="1.5" fill="none" stroke="#6b6f79" stroke-width="1.3" />
<path d="M28.5 729.3 h9.3" fill="none" stroke="#6b6f79" stroke-width="1.3" stroke-linecap="round" stroke-linejoin="round" />
<path d="M28.5 722.9 v-4.5 M33 722.9 v-8.3 M37.5 722.9 v-5.7" fill="none" stroke="#6b6f79" stroke-width="1.4" stroke-linecap="round" stroke-linejoin="round" stroke-linecap="butt"/>
<rect x="23.2" y="782.3" width="7.8" height="7.5" rx="0.5" fill="#53565e" stroke="none" stroke-width="1.2" />
<rect x="23.2" y="792.4" width="7.8" height="7.6" rx="0.5" fill="#53565e" stroke="none" stroke-width="1.2" />
<rect x="33.3" y="792.4" width="8.3" height="7.6" rx="0.5" fill="#53565e" stroke="none" stroke-width="1.2" />
<path d="M37.8 781.1 l5.1 5.1 l-5.1 5.1 l-5.1 -5.1z" fill="#8a8e9a"/>
<path d="M49 801 v5.7 h-5.7z" fill="#34373e"/>
<path d="M29.1 931.5 h7.8 l3.3 5.9 l-7.3 8 l-7 -8z" fill="none" stroke="#c9a14a" stroke-width="1.2" stroke-linecap="round" stroke-linejoin="round" />
<path d="M30.4 935.9 h5.2" fill="none" stroke="#c9a14a" stroke-width="1.8" stroke-linecap="round" stroke-linejoin="round" stroke-linecap="butt"/>
<path d="M32.9 994.5 l8.2 4.7 v9.4 l-8.2 4.7 l-8.2 -4.7 v-9.4z" fill="none" stroke="#7a7f8c" stroke-width="1.3" stroke-linecap="round" stroke-linejoin="round" />
<circle cx="32.9" cy="1003.9" r="3.9" fill="none" stroke="#7a7f8c" stroke-width="1.3"/>
<circle cx="46.4" cy="995.5" r="2.7" fill="#d83a3a" stroke="none" stroke-width="1.2"/>
<rect x="1889.8" y="56.2" width="4.4" height="5.6" rx="1" fill="none" stroke="#7a7f8c" stroke-width="1.1" />
<rect x="1889.8" y="64.8" width="4.4" height="5.8" rx="1" fill="none" stroke="#7a7f8c" stroke-width="1.1" />
<path d="M1896.8 57.6 h9 M1896.8 60.8 h9 M1896.8 63.7 h9 M1896.8 66.7 h9 M1896.8 69.8 h9" fill="none" stroke="#7a7f8c" stroke-width="1.1" stroke-linecap="round" stroke-linejoin="round" />
<rect x="1889.9" y="111.8" width="14.7" height="16" rx="1.5" fill="none" stroke="#7a7f8c" stroke-width="1.3" />
<path d="M1892.8 116.4 h9 M1892.8 119.8 h9 M1892.8 123.2 h5" fill="none" stroke="#7a7f8c" stroke-width="1.2" stroke-linecap="round" stroke-linejoin="round" />
<path d="M1891.2 180 v-12.3 h14 v16 h-14 a2.6 2.6 0 0 1 -2.6 -2.6 v-2.6 h2.6 v2.6" fill="none" stroke="#7a7f8c" stroke-width="1.3" stroke-linecap="round" stroke-linejoin="round" />
<text x="1898.2" y="179.5" font-family="Liberation Sans, sans-serif" font-size="9.5" font-weight="bold" fill="#7a7f8c" text-anchor="middle">$</text>
<path d="M1890.8 240 v-4 M1894.8 240 v-5.7 M1899.3 240 v-7 M1903.7 240 v-9" fill="none" stroke="#7a7f8c" stroke-width="1.4" stroke-linecap="round" stroke-linejoin="round" stroke-linecap="butt"/>
<path d="M1889.8 232 q8 -1.5 13.2 -7.6 M1899.8 223.8 h3.6 v3.6" fill="none" stroke="#7a7f8c" stroke-width="1.2" stroke-linecap="round" stroke-linejoin="round" />
<rect x="1888.6" y="280.5" width="16.8" height="12.6" rx="1" fill="none" stroke="#7a7f8c" stroke-width="1.3" />
<path d="M1892.8 295.8 h8.2" fill="none" stroke="#7a7f8c" stroke-width="1.3" stroke-linecap="round" stroke-linejoin="round" />
<path d="M1893.2 289.9 v-3.9 M1896.9 289.9 v-6.7 M1900.6 289.9 v-5.1" fill="none" stroke="#7a7f8c" stroke-width="1.4" stroke-linecap="round" stroke-linejoin="round" stroke-linecap="butt"/>
<rect x="1887.6" y="341" width="15" height="9.2" rx="0" fill="none" stroke="#7a7f8c" stroke-width="1.2" />
<path d="M1889.5 338.8 h15.2 v8.2 M1891.3 336.6 h15.4 v8.2" fill="none" stroke="#7a7f8c" stroke-width="1" stroke-linecap="round" stroke-linejoin="round" />
<text x="1895.1" y="348.6" font-family="Liberation Sans, sans-serif" font-size="6.6" font-weight="bold" fill="#7a7f8c" text-anchor="middle">ETF</text>
<rect x="1889" y="396" width="16.2" height="12" rx="3" fill="none" stroke="#7a7f8c" stroke-width="1.5" />
<path d="M1887.6 399.5 v5.5 M1906.6 399.5 v5.5" fill="none" stroke="#7a7f8c" stroke-width="1.6" stroke-linecap="round" stroke-linejoin="round" />
<path d="M1897.2 396 v-1.5" fill="none" stroke="#7a7f8c" stroke-width="1.2" stroke-linecap="round" stroke-linejoin="round" />
<circle cx="1897.4" cy="393.2" r="1.3" fill="#e8413a" stroke="none" stroke-width="1.2"/>
<circle cx="1893.8" cy="402.4" r="1.1" fill="#7a7f8c" stroke="none" stroke-width="1.2"/>
<path d="M1901.2 401.2 l-1.8 1.2 l1.8 1.2z" fill="#7a7f8c"/>
<path d="M1895.2 456.4 a7.7 7.7 0 1 0 3.8 0" fill="none" stroke="#7a7f8c" stroke-width="1.2"/>
<path d="M1892.5 461.8 h9 l-2 -2 M1901.5 465.6 h-9 l2 2" fill="none" stroke="#7a7f8c" stroke-width="1.2" stroke-linecap="round" stroke-linejoin="round" />
<rect x="1888.8" y="842.6" width="16.6" height="15.6" rx="1" fill="none" stroke="#7a7f8c" stroke-width="1.4" />
<path d="M1888.8 847.6 h16.6 M1894.2 847.6 v10.6" fill="none" stroke="#7a7f8c" stroke-width="1.4" stroke-linecap="round" stroke-linejoin="round" />
<path d="M1890.9 905 v-0.6 a6 6 0 0 1 12 0 v0.6" fill="none" stroke="#7a7f8c" stroke-width="1.4" stroke-linecap="round" stroke-linejoin="round" />
<rect x="1888.9" y="903" width="3.9" height="7.2" rx="1.2" fill="#7a7f8c" stroke="none" stroke-width="1.2" />
<rect x="1901" y="903" width="3.9" height="7.2" rx="1.2" fill="#7a7f8c" stroke="none" stroke-width="1.2" />
<path d="M1903.4 910 q-0.8 3 -5.4 3.2" fill="none" stroke="#7a7f8c" stroke-width="1.3" stroke-linecap="round" stroke-linejoin="round" />
<circle cx="1897.4" cy="913.1" r="1.1" fill="#7a7f8c" stroke="none" stroke-width="1.2"/>
<path d="M1886.6 956.5 l-0.6 -4.2 l4.6 1.5z M1907 956.5 l0.6 -4.2 l-4.6 1.5z" fill="#e9edf4"/>
<ellipse cx="1896.8" cy="960.6" rx="11.6" ry="8.6" fill="#f1f4f9"/>
<path d="M1890.6 968.5 h12.4 l-1.6 5 q-4.6 2 -9.2 0z" fill="#e3e7ef"/>
<ellipse cx="1896.9" cy="962.2" rx="9.1" ry="5.5" fill="#141a3c"/>
<path d="M1888.6 964.6 q8.3 6.2 16.6 0" fill="none" stroke="#b44fe0" stroke-width="1.2" opacity="0.85"/>
<circle cx="1893.1" cy="961.8" r="2" fill="#ffffff"/><circle cx="1900.9" cy="961.8" r="2" fill="#ffffff"/>
<path d="M99.5 920.5 h1.5 v9.6 h-7 M89 920.5 h7 M91.3 918.2 v3 M97.3 918.2 v3 M88.3 926.6 h4.5 l-1.8 -1.8 M92.8 926.6 l-1.8 1.8 M89 920.5 v3" fill="none" stroke="#b9bdc8" stroke-width="1.2" stroke-linecap="round" stroke-linejoin="round" />
<line x1="171.5" y1="909" x2="171.5" y2="939" stroke="#202227" stroke-width="1"/>
<line x1="273.5" y1="909" x2="273.5" y2="939" stroke="#202227" stroke-width="1"/>
<line x1="463.5" y1="909" x2="463.5" y2="939" stroke="#202227" stroke-width="1"/>
<path d="M249.4 923.4 l1.8 1.7 l1.8 -1.7" fill="none" stroke="#6b6f79" stroke-width="1" stroke-linecap="round" stroke-linejoin="round" />
<path d="M656.6 924.5 v3.6 a1 1 0 0 1 -1 1 h-6.4 a1 1 0 0 1 -1 -1 v-6.4 a1 1 0 0 1 1 -1 h3.6" fill="none" stroke="#6b6f79" stroke-width="1.1" stroke-linecap="round" stroke-linejoin="round" />
<path d="M651.6 925.6 l0.4 -1.9 l4.4 -4.4 l1.5 1.5 l-4.4 4.4z" fill="none" stroke="#6b6f79" stroke-width="1" stroke-linecap="round" stroke-linejoin="round" />
<path d="M967.4 969.6 l3.6 -3.6 l3.6 3.6z" fill="#b9bdc8"/>
<path d="M1827 991.5 l5 -4.8 l5 4.8" fill="none" stroke="#9aa0aa" stroke-width="1.3" stroke-linecap="round" stroke-linejoin="round" />
<rect x="1850.7" y="982.7" width="12.6" height="12.6" rx="1.5" fill="none" stroke="#9aa0aa" stroke-width="1.2" />
<path d="M1853.6 988.2 v-2.6 h2.6 M1860.4 989.8 v2.6 h-2.6" fill="none" stroke="#9aa0aa" stroke-width="1.2" stroke-linecap="round" stroke-linejoin="round" />
<path d="M286.5 1026 l0.7 -3.2 l6.6 -6.6 l2.5 2.5 l-6.6 6.6z" fill="#9aa0aa"/>
<path d="M292.5 1026.5 h4.5" fill="none" stroke="#9aa0aa" stroke-width="1.4" stroke-linecap="round" stroke-linejoin="round" />
<rect x="1647.5" y="1014" width="12.6" height="12.6" rx="1" fill="#b9bdc8" stroke="none" stroke-width="1.2" />
<path d="M1647.8 1028.4 h12.6" fill="none" stroke="#b9bdc8" stroke-width="1.3" stroke-linecap="round" stroke-linejoin="round" />
<text x="1653.8" y="1024.4" font-family="Liberation Sans, sans-serif" font-size="10" font-weight="bold" fill="#0e0f12" text-anchor="middle">?</text>
<path d="M1674.6 1018.2 a10.5 10.5 0 0 1 15 0 M1677 1020.9 a7 7 0 0 1 10.2 0 M1679.4 1023.6 a3.8 3.8 0 0 1 5.4 0" fill="none" stroke="#b9bdc8" stroke-width="1.3" stroke-linecap="round" stroke-linejoin="round" />
<circle cx="1682.1" cy="1026.4" r="1.2" fill="#b9bdc8" stroke="none" stroke-width="1.2"/>
</svg>
<span class="t" style="left:37px;top:11px;font-size:14px;color:#ececec;">泡沫追逐者</span>
<span class="t" style="left:137px;top:12px;font-size:12px;color:#7d828c;font-style:italic;">未开通</span>
<span class="t" style="left:1439px;top:12.5px;font-size:12px;color:#7d828c;letter-spacing:-0.2px;">OKX BTC/USDT 永续</span>
<span class="t" style="left:1588px;top:12.5px;font-size:11px;color:#6b7079;font-style:italic;">/</span>
<span class="t" style="left:1672px;top:12.5px;font-size:12px;color:#e8e8e8;letter-spacing:-0.3px;">USD</span>
<span class="t" style="left:101px;top:42px;font-size:14px;color:#e6e6e6;letter-spacing:-0.3px;">BTC/USDT</span>
<span class="t" style="left:79px;top:61px;font-size:14px;color:#25b57a;">107200.00</span>
<span class="t" style="left:153px;top:61px;font-size:14px;color:#25b57a;">0.72%</span>
<span class="t" style="left:245px;top:47.5px;font-size:17px;color:#6b7079;font-weight:100;">+</span>
<span class="t" style="left:102px;top:84.6px;font-size:14px;color:#e8e9ed;font-weight:600;">指标</span>
<span class="t" style="left:164px;top:84.6px;font-size:14px;color:#e8e9ed;font-weight:600;">高级</span>
<span class="t" style="left:225px;top:84.6px;font-size:14px;color:#e8e9ed;font-weight:600;">多窗</span>
<span class="t" style="left:286px;top:84.6px;font-size:14px;color:#e8e9ed;font-weight:600;">复盘</span>
<span class="t" style="left:373px;top:84.6px;font-size:14px;color:#d6d8de;">周期</span>
<span class="t" style="left:432px;top:84.6px;font-size:14px;color:#d6d8de;letter-spacing:-0.5px;">15分</span>
<span class="t" style="left:471px;top:84.6px;font-size:14px;color:#d6d8de;letter-spacing:-0.5px;">45分</span>
<span class="t" style="left:511px;top:84.6px;font-size:14px;color:#2b8cff;letter-spacing:-0.5px;">4时</span>
<span class="t" style="left:543px;top:84.6px;font-size:14px;color:#d6d8de;letter-spacing:-0.5px;">8时</span>
<span class="t" style="left:576px;top:84.6px;font-size:14px;color:#d6d8de;letter-spacing:-0.5px;">1日</span>
<span class="t" style="left:608px;top:84.6px;font-size:14px;color:#d6d8de;letter-spacing:-0.5px;">1秒</span>
<span class="t" style="left:641px;top:84.6px;font-size:14px;color:#d6d8de;letter-spacing:-0.5px;">30秒</span>
<span class="t" style="left:680px;top:84.6px;font-size:14px;color:#d6d8de;letter-spacing:-0.5px;">分时</span>
<span class="t" style="left:718px;top:84.6px;font-size:14px;color:#d6d8de;letter-spacing:-0.5px;">1分</span>
<span class="t" style="left:751px;top:84.6px;font-size:14px;color:#d6d8de;letter-spacing:-0.5px;">5分</span>
<span class="t" style="left:783px;top:84.6px;font-size:14px;color:#d6d8de;letter-spacing:-0.5px;">10分</span>
<span class="t" style="left:823px;top:84.6px;font-size:14px;color:#d6d8de;letter-spacing:-0.5px;">30分</span>
<span class="t" style="left:863px;top:84.6px;font-size:14px;color:#d6d8de;letter-spacing:-0.5px;">1时</span>
<span class="t" style="left:895px;top:84.6px;font-size:14px;color:#d6d8de;letter-spacing:-0.5px;">2时</span>
<span class="t" style="left:928px;top:84.6px;font-size:14px;color:#d6d8de;letter-spacing:-0.5px;">3时</span>
<span class="t" style="left:960px;top:84.6px;font-size:14px;color:#d6d8de;letter-spacing:-0.5px;">12时</span>
<span class="t" style="left:1000px;top:84.6px;font-size:14px;color:#d6d8de;letter-spacing:-0.5px;">2日</span>
<span class="t" style="left:1032px;top:84.6px;font-size:14px;color:#d6d8de;letter-spacing:-0.5px;">3日</span>
<span class="t" style="left:1065px;top:84.6px;font-size:14px;color:#d6d8de;letter-spacing:-0.5px;">周K</span>
<span class="t" style="left:1099px;top:84.6px;font-size:14px;color:#d6d8de;letter-spacing:-0.5px;">15日</span>
<span class="t" style="left:1138px;top:84.6px;font-size:14px;color:#d6d8de;letter-spacing:-0.5px;">月K</span>
<span class="t" style="left:1172px;top:84.6px;font-size:14px;color:#d6d8de;letter-spacing:-0.5px;">季K</span>
<span class="t" style="left:1206px;top:84.6px;font-size:14px;color:#d6d8de;letter-spacing:-0.5px;">年K</span>
<span class="t" style="left:1467px;top:86.3px;font-size:13px;color:#c5cde0;">0s</span>
<span class="t" style="left:1607px;top:85.9px;font-size:14px;color:#ececec;font-weight:600;">显示</span>
<span class="t" style="left:1723px;top:87px;font-size:12px;color:#d6d8de;">未命名</span>
<span class="t" style="left:1792px;top:87.2px;font-size:12px;color:#ffffff;font-weight:600;">AI解读</span>
<div class="b" style="left:126px;top:70px;width:32px;height:14px;border-radius:7px 7px 7px 2px;background:linear-gradient(160deg,#fb7a2c 0%,#ee452f 100%);"></div>
<span class="t" style="left:130.5px;top:72.3px;font-size:10px;color:#fff;font-weight:bold;">NEW</span>
<span class="t" style="left:290px;top:117.5px;font-size:15px;color:#d8a21a;">主</span>
<span class="t" style="left:321.5px;top:117.5px;font-size:15px;color:#d8a21a;">大</span>
<span class="t" style="left:353.5px;top:117.5px;font-size:15px;color:#d8a21a;">筹</span>
<span class="t" style="left:103px;top:164px;font-size:12px;color:#8a8f99;letter-spacing:-0.35px;">自定义TD指标策略_副本</span>
<span class="t" style="left:103px;top:181.5px;font-size:12px;color:#8a8f99;letter-spacing:-0.4px;">超级波段追踪多头策略_副本</span>
<span class="t" style="left:103px;top:199.75px;font-size:11.5px;color:#6f747e;">BOLL(20,2)</span>
<span class="t" style="left:186px;top:199.5px;font-size:12px;color:#d0d0d0;letter-spacing:-0.2px;">BOLL:108566.32</span>
<span class="t" style="left:280px;top:199.5px;font-size:12px;color:#e4da2a;font-weight:bold;letter-spacing:-0.2px;">UB:112744.45</span>
<span class="t" style="left:361px;top:199.5px;font-size:12px;color:#e045b4;letter-spacing:-0.2px;">LB:104388.19</span>
<span class="t" style="left:73px;top:200px;font-size:12px;color:#ee3fb5;letter-spacing:-0.1px;">100.0%(126199.63)</span>
<span class="t" style="left:73px;top:279.5px;font-size:12px;color:#ee3fb5;letter-spacing:-0.1px;">78.6%(121039.55)</span>
<span class="t" style="left:73px;top:340.5px;font-size:12px;color:#3f83ee;letter-spacing:-0.1px;">61.8%(116988.64)</span>
<span class="t" style="left:73px;top:384.5px;font-size:12px;color:#3f83ee;letter-spacing:-0.1px;">50.0%(114143.37)</span>
<span class="t" style="left:73px;top:428px;font-size:12px;color:#a52bea;letter-spacing:-0.1px;">38.2%(111298.09)</span>
<span class="t" style="left:73px;top:482px;font-size:12px;color:#a52bea;letter-spacing:-0.1px;">23.6%(107777.66)</span>
<span class="t" style="left:73px;top:567.5px;font-size:12px;color:#7a3cf0;letter-spacing:-0.1px;">0.0%(102087.10)</span>
<span class="t" style="left:612px;top:208.5px;font-size:12px;color:#ffffff;letter-spacing:-0.08px;">126199.63</span>
<span class="t" style="left:788px;top:578px;font-size:12px;color:#ffffff;letter-spacing:-0.08px;">102000.00</span>
<span class="t" style="left:480px;top:299.25px;font-size:13.5px;color:#ff1c1c;font-weight:500;">超买</span>
<span class="t" style="left:381px;top:368.25px;font-size:13.5px;color:#ff1c1c;font-weight:500;">超买</span>
<span class="t" style="left:72px;top:446.75px;font-size:13.5px;color:#1f9212;font-weight:500;">卖</span>
<span class="t" style="left:99px;top:446.75px;font-size:13.5px;color:#1f9212;font-weight:500;">买入</span>
<span class="t" style="left:141px;top:458.75px;font-size:13.5px;color:#1f9212;font-weight:500;">买入</span>
<span class="t" style="left:198px;top:465.25px;font-size:13.5px;color:#1f9212;font-weight:500;">买入</span>
<span class="t" style="left:233px;top:496.25px;font-size:13.5px;color:#1f9212;font-weight:500;">超卖</span>
<span class="t" style="left:1803px;top:578.75px;font-size:12px;color:#8d95a8;letter-spacing:-0.05px;">102000.00</span>
<span class="t" style="left:1803px;top:548.26px;font-size:12px;color:#8d95a8;letter-spacing:-0.05px;">104000.00</span>
<span class="t" style="left:1803px;top:517.77px;font-size:12px;color:#8d95a8;letter-spacing:-0.05px;">106000.00</span>
<span class="t" style="left:1803px;top:487.28px;font-size:12px;color:#8d95a8;letter-spacing:-0.05px;">108000.00</span>
<span class="t" style="left:1803px;top:456.79px;font-size:12px;color:#8d95a8;letter-spacing:-0.05px;">110000.00</span>
<span class="t" style="left:1803px;top:426.3px;font-size:12px;color:#8d95a8;letter-spacing:-0.05px;">112000.00</span>
<span class="t" style="left:1803px;top:395.81px;font-size:12px;color:#8d95a8;letter-spacing:-0.05px;">114000.00</span>
<span class="t" style="left:1803px;top:365.32px;font-size:12px;color:#8d95a8;letter-spacing:-0.05px;">116000.00</span>
<span class="t" style="left:1803px;top:334.83px;font-size:12px;color:#8d95a8;letter-spacing:-0.05px;">118000.00</span>
<span class="t" style="left:1803px;top:304.34px;font-size:12px;color:#8d95a8;letter-spacing:-0.05px;">120000.00</span>
<span class="t" style="left:1803px;top:273.85px;font-size:12px;color:#8d95a8;letter-spacing:-0.05px;">122000.00</span>
<span class="t" style="left:1803px;top:243.36px;font-size:12px;color:#8d95a8;letter-spacing:-0.05px;">124000.00</span>
<span class="t" style="left:1803px;top:212.87px;font-size:12px;color:#8d95a8;letter-spacing:-0.05px;">126000.00</span>
<span class="t" style="left:1803px;top:182.38px;font-size:12px;color:#8d95a8;letter-spacing:-0.05px;">128000.00</span>
<span class="t" style="left:1803px;top:151.89px;font-size:12px;color:#8d95a8;letter-spacing:-0.05px;">130000.00</span>
<div class="b" style="left:1793px;top:495px;width:77.2px;height:20px;background:#26a17b;"></div>
<div class="b" style="left:1793px;top:505px;width:6px;height:1px;background:#fff;"></div>
<span class="t" style="left:1803px;top:498.9px;font-size:12px;color:#fff;font-weight:bold;letter-spacing:-0.15px;">107200.01</span>
<div class="b" style="left:1868px;top:500px;width:6px;height:38px;border-radius:2px;background:#33353d;"></div>
<svg class="main" width="1920" height="1039" style="pointer-events:none"><path d="M1873.8 515 l-4 4.1 l4 4.1z" fill="#8a8d9a"/></svg>
<span class="t" style="left:1791px;width:80px;text-align:center;top:628.5px;font-size:12px;color:#8d95a8;">2000.00</span>
<span class="t" style="left:1791px;width:80px;text-align:center;top:672.5px;font-size:12px;color:#8d95a8;">0.00</span>
<span class="t" style="left:1791px;width:80px;text-align:center;top:715.5px;font-size:12px;color:#8d95a8;">-2000.00</span>
<span class="t" style="left:1791px;width:80px;text-align:center;top:774.5px;font-size:12px;color:#8d95a8;">100.00</span>
<span class="t" style="left:1791px;width:80px;text-align:center;top:821.5px;font-size:12px;color:#8d95a8;">50.00</span>
<span class="t" style="left:1791px;width:80px;text-align:center;top:868.5px;font-size:12px;color:#8d95a8;">0.00</span>
<span class="t" style="left:117px;top:612px;font-size:12px;color:#8a8f99;letter-spacing:-0.2px;">MACD(12,26,9)</span>
<span class="t" style="left:203px;top:612px;font-size:12px;color:#d0d0d0;font-weight:bold;letter-spacing:-0.2px;">DIF:-1662.32</span>
<span class="t" style="left:277px;top:612px;font-size:12px;color:#e4da2a;font-weight:bold;letter-spacing:-0.35px;">DEA:-1768.82</span>
<span class="t" style="left:356px;top:612px;font-size:12px;color:#d8453f;letter-spacing:-0.2px;">MACD:213.00</span>
<span class="t" style="left:117px;top:753px;font-size:12px;color:#8a8f99;letter-spacing:-0.2px;">KDJ(9,3,3)</span>
<span class="t" style="left:178px;top:753px;font-size:12px;color:#d0d0d0;font-weight:bold;letter-spacing:-0.2px;">K:56.08</span>
<span class="t" style="left:224px;top:753px;font-size:12px;color:#e4da2a;font-weight:bold;letter-spacing:-0.2px;">D:46.34</span>
<span class="t" style="left:272px;top:753px;font-size:12px;color:#e045b4;letter-spacing:-0.2px;">J:75.55</span>
<span class="t" style="left:136.5px;width:80px;text-align:center;top:887.8px;font-size:12px;color:#8d95a8;">9月 25</span>
<span class="t" style="left:221px;width:80px;text-align:center;top:887.8px;font-size:12px;color:#8d95a8;">9月 27</span>
<span class="t" style="left:305.5px;width:80px;text-align:center;top:887.8px;font-size:12px;color:#8d95a8;">9月 29</span>
<span class="t" style="left:390px;width:80px;text-align:center;top:887.8px;font-size:12px;color:#8d95a8;">10月 1</span>
<span class="t" style="left:474.5px;width:80px;text-align:center;top:887.8px;font-size:12px;color:#8d95a8;">10月 3</span>
<span class="t" style="left:559px;width:80px;text-align:center;top:887.8px;font-size:12px;color:#8d95a8;">10月 5</span>
<span class="t" style="left:643.5px;width:80px;text-align:center;top:887.8px;font-size:12px;color:#8d95a8;">10月 7</span>
<span class="t" style="left:728px;width:80px;text-align:center;top:887.8px;font-size:12px;color:#8d95a8;">10月 9</span>
<span class="t" style="left:812.5px;width:80px;text-align:center;top:887.8px;font-size:12px;color:#8d95a8;">10月 11</span>
<span class="t" style="left:897px;width:80px;text-align:center;top:887.8px;font-size:12px;color:#8d95a8;">10月 13</span>
<span class="t" style="left:981.5px;width:80px;text-align:center;top:887.8px;font-size:12px;color:#8d95a8;">10月 15</span>
<span class="t" style="left:1066px;width:80px;text-align:center;top:887.8px;font-size:12px;color:#8d95a8;">10月 17</span>
<span class="t" style="left:1150.5px;width:80px;text-align:center;top:887.8px;font-size:12px;color:#8d95a8;">10月 19</span>
<span class="t" style="left:1235px;width:80px;text-align:center;top:887.8px;font-size:12px;color:#8d95a8;">10月 21</span>
<span class="t" style="left:1319.5px;width:80px;text-align:center;top:887.8px;font-size:12px;color:#8d95a8;">10月 23</span>
<span class="t" style="left:1404px;width:80px;text-align:center;top:887.8px;font-size:12px;color:#8d95a8;">10月 25</span>
<span class="t" style="left:1488.5px;width:80px;text-align:center;top:887.8px;font-size:12px;color:#8d95a8;">10月 27</span>
<span class="t" style="left:1573px;width:80px;text-align:center;top:887.8px;font-size:12px;color:#8d95a8;">10月 29</span>
<span class="t" style="left:1657.5px;width:80px;text-align:center;top:887.8px;font-size:12px;color:#8d95a8;">10月 31</span>
<span class="t" style="left:1742px;width:80px;text-align:center;top:887.8px;font-size:12px;color:#8d95a8;">11月 2</span>
<span class="t" style="left:1832.5px;top:888px;font-size:12px;color:#8d95a8;">筹</span>
<span class="t" style="left:1853.5px;top:888px;font-size:12px;color:#8d95a8;">爆</span>
<span class="t" style="left:104.5px;top:855.25px;font-size:17.5px;color:#ffffff;font-weight:bold;letter-spacing:0.1px;">AiCoin</span>
<span class="t" style="left:110px;top:917.5px;font-size:13px;color:#f0f0f0;font-weight:bold;">定位到...</span>
<span class="t" style="left:191px;top:917.5px;font-size:13px;color:#f0f0f0;font-weight:bold;">日期范围</span>
<span class="t" style="left:294px;top:917.25px;font-size:13.5px;color:#7d828c;letter-spacing:-0.5px;">MA</span>
<span class="t" style="left:342px;top:917.25px;font-size:13.5px;color:#7d828c;letter-spacing:-0.5px;">EMA</span>
<span class="t" style="left:397px;top:917.25px;font-size:13.5px;color:#2b8cff;letter-spacing:-0.5px;">BOLL</span>
<span class="t" style="left:482px;top:917.25px;font-size:13.5px;color:#2b8cff;letter-spacing:-0.5px;">MACD</span>
<span class="t" style="left:548px;top:917.25px;font-size:13.5px;color:#7d828c;letter-spacing:-1px;">RSI</span>
<span class="t" style="left:595px;top:917.25px;font-size:13.5px;color:#2b8cff;letter-spacing:-0.5px;">KDJ</span>
<span class="t" style="left:667px;top:917.5px;font-size:13px;color:#8a8f99;font-weight:bold;">社区指标</span>
<span class="t" style="left:1784px;top:917.5px;font-size:13px;color:#7d828c;">对数</span>
<span class="t" style="left:1820px;top:917.5px;font-size:13px;color:#7d828c;">%</span>
<span class="t" style="left:1841px;top:917.5px;font-size:13px;color:#2b8cff;">自动</span>
<span class="t" style="left:78px;top:945.6px;font-size:14px;color:#d6d8de;letter-spacing:-0.5px;">15分</span>
<span class="t" style="left:118px;top:945.6px;font-size:14px;color:#d6d8de;letter-spacing:-0.5px;">45分</span>
<span class="t" style="left:158px;top:945.6px;font-size:14px;color:#2b8cff;letter-spacing:-0.5px;">4时</span>
<span class="t" style="left:190px;top:945.6px;font-size:14px;color:#d6d8de;letter-spacing:-0.5px;">8时</span>
<span class="t" style="left:223px;top:945.6px;font-size:14px;color:#d6d8de;letter-spacing:-0.5px;">1日</span>
<span class="t" style="left:255px;top:945.6px;font-size:14px;color:#d6d8de;letter-spacing:-0.5px;">1秒</span>
<span class="t" style="left:287px;top:945.6px;font-size:14px;color:#d6d8de;letter-spacing:-0.5px;">30秒</span>
<span class="t" style="left:327px;top:945.6px;font-size:14px;color:#d6d8de;letter-spacing:-0.5px;">分时</span>
<span class="t" style="left:366px;top:945.6px;font-size:14px;color:#d6d8de;letter-spacing:-0.5px;">1分</span>
<span class="t" style="left:398px;top:945.6px;font-size:14px;color:#d6d8de;letter-spacing:-0.5px;">5分</span>
<span class="t" style="left:430px;top:945.6px;font-size:14px;color:#d6d8de;letter-spacing:-0.5px;">10分</span>
<span class="t" style="left:470px;top:945.6px;font-size:14px;color:#d6d8de;letter-spacing:-0.5px;">30分</span>
<span class="t" style="left:510px;top:945.6px;font-size:14px;color:#d6d8de;letter-spacing:-0.5px;">1时</span>
<span class="t" style="left:542px;top:945.6px;font-size:14px;color:#d6d8de;letter-spacing:-0.5px;">2时</span>
<span class="t" style="left:575px;top:945.6px;font-size:14px;color:#d6d8de;letter-spacing:-0.5px;">3时</span>
<span class="t" style="left:607px;top:945.6px;font-size:14px;color:#d6d8de;letter-spacing:-0.5px;">12时</span>
<span class="t" style="left:647px;top:945.6px;font-size:14px;color:#d6d8de;letter-spacing:-0.5px;">2日</span>
<span class="t" style="left:679px;top:945.6px;font-size:14px;color:#d6d8de;letter-spacing:-0.5px;">3日</span>
<span class="t" style="left:711px;top:945.6px;font-size:14px;color:#d6d8de;letter-spacing:-0.5px;">周K</span>
<span class="t" style="left:746px;top:945.6px;font-size:14px;color:#d6d8de;letter-spacing:-0.5px;">15日</span>
<span class="t" style="left:785px;top:945.6px;font-size:14px;color:#d6d8de;letter-spacing:-0.5px;">月K</span>
<span class="t" style="left:819px;top:945.6px;font-size:14px;color:#d6d8de;letter-spacing:-0.5px;">季K</span>
<span class="t" style="left:853px;top:945.6px;font-size:14px;color:#d6d8de;letter-spacing:-0.5px;">年K</span>
<span class="t" style="left:891px;top:945.6px;font-size:14px;color:#9aa0aa;">×</span>
<span class="t" style="left:90px;top:982px;font-size:14px;color:#2b8cff;">委单区</span>
<span class="t" style="left:172px;top:982px;font-size:14px;color:#d6d8de;letter-spacing:0.2px;">自定义指标/回测/实盘</span>
<span class="t" style="left:349px;top:982px;font-size:14px;color:#d6d8de;">AI 网格</span>
<span class="t" style="left:433px;top:982px;font-size:14px;color:#d6d8de;">现货DCA</span>
<span class="t" style="left:530px;top:982px;font-size:14px;color:#d6d8de;">组合下单</span>
<span class="t" style="left:641px;top:982px;font-size:14px;color:#d6d8de;">AI分析</span>
<span class="t" style="left:78px;top:1014.4px;font-size:13px;color:#d6d8de;">资产(₮)</span>
<span class="t" style="left:152px;top:1014.4px;font-size:13px;color:#2b8cff;">实时资产风控</span>
<div class="b" style="left:321px;top:1011px;width:37px;height:21px;border-radius:10.5px;background:#13233a;"></div>
<span class="t" style="left:328px;top:1014.4px;font-size:13px;color:#2b8cff;">主力</span>
<span class="t" style="left:370px;top:1014.4px;font-size:13px;color:#d6d8de;letter-spacing:-0.3px;">BTC主力24H挂单</span>
<span class="t" style="left:473px;top:1014.4px;font-size:13px;color:#f39a1e;">50.07亿美元</span>
<span class="t" style="left:1700px;top:1014.4px;font-size:13px;color:#d6d8de;">线路 3 :</span>
<span class="t" style="left:1747px;top:1014.4px;font-size:13px;color:#25b57a;">优</span>
<span class="t" style="left:1787px;top:1014.4px;font-size:13px;color:#d6d8de;letter-spacing:-1px;">SGT</span>
<span class="t" style="left:1818px;top:1014.4px;font-size:13px;color:#d6d8de;letter-spacing:0.15px;">10/18 20:15:00</span>
<span class="t" style="left:0px;width:66px;text-align:center;top:87px;font-size:12px;color:#717889;">首页</span>
<span class="t" style="left:0px;width:66px;text-align:center;top:159px;font-size:12px;color:#2b8cff;font-weight:bold;">行情</span>
<span class="t" style="left:0px;width:66px;text-align:center;top:231px;font-size:12px;color:#717889;">快讯</span>
<span class="t" style="left:0px;width:66px;text-align:center;top:303px;font-size:12px;color:#717889;">要闻</span>
<span class="t" style="left:0px;width:66px;text-align:center;top:375px;font-size:12px;color:#717889;">策略</span>
<span class="t" style="left:0px;width:66px;text-align:center;top:447px;font-size:12px;color:#717889;">Web3</span>
<span class="t" style="left:0px;width:66px;text-align:center;top:519px;font-size:12px;color:#717889;">资产</span>
<span class="t" style="left:0px;width:66px;text-align:center;top:591px;font-size:12px;color:#717889;">群聊</span>
<span class="t" style="left:0px;width:66px;text-align:center;top:663px;font-size:12px;color:#717889;">授权</span>
<span class="t" style="left:0px;width:66px;text-align:center;top:735px;font-size:12px;color:#717889;">数据</span>
<span class="t" style="left:0px;width:66px;text-align:center;top:809px;font-size:12px;color:#717889;">更多</span>
<span class="t" style="left:0px;width:66px;text-align:center;top:947.5px;font-size:13px;color:#d8a21a;">VIP</span>
<div class="b" style="left:39px;top:479px;width:28px;height:15px;border-radius:7px 7px 7px 2px;background:#e8413a;"></div>
<span class="t" style="left:42px;top:481px;font-size:11px;color:#fff;">链上</span>
</body></html>
